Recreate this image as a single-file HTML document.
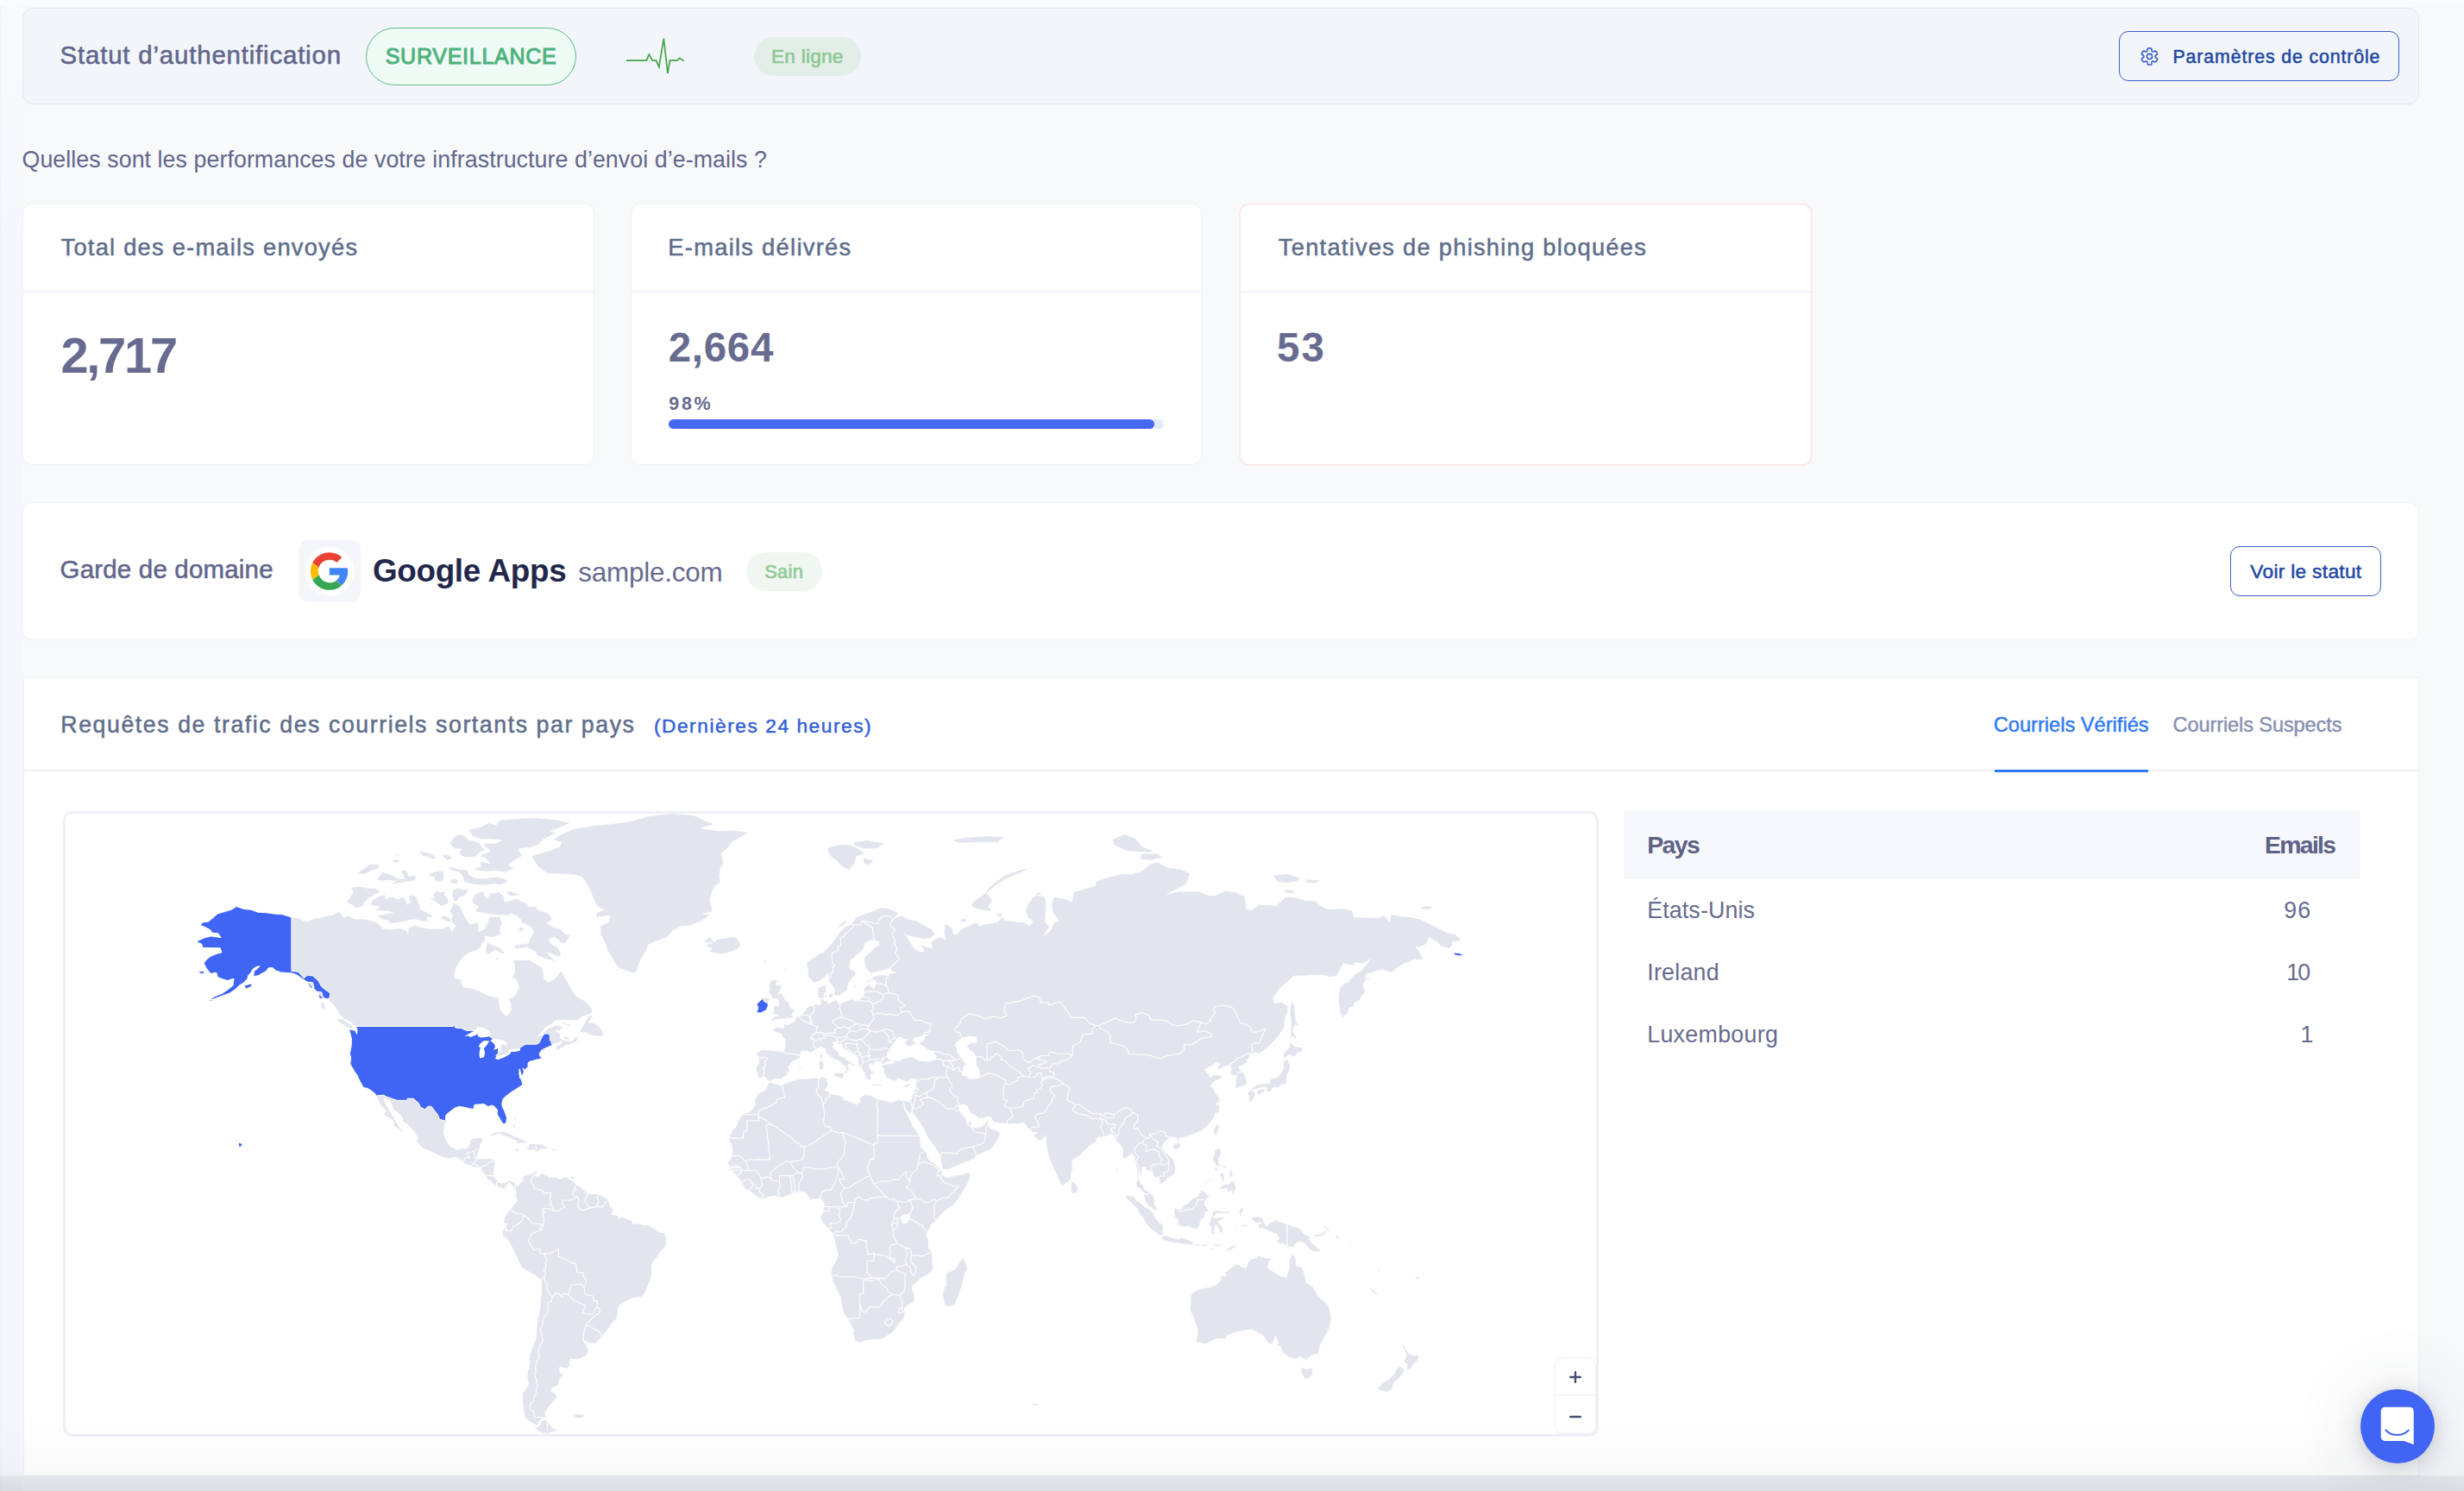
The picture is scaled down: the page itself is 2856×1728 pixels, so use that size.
<!DOCTYPE html><html lang="fr"><head><meta charset="utf-8"><title>Dashboard</title><style>
*{box-sizing:border-box;margin:0;padding:0}
html,body{width:2856px;height:1728px;overflow:hidden}
body{background:#f8f9fb;font-family:"Liberation Sans", sans-serif;position:relative}
.t{position:absolute;white-space:pre;font-family:"Liberation Sans", sans-serif}
.abs{position:absolute}
.card{position:absolute;background:#fff;border-radius:10px;box-shadow:0 0 0 1px rgba(228,232,240,.4)}
.hr{position:absolute;height:2px;background:#f1f4f9}
</style></head><body>
<div class="abs" style="left:0;top:0;width:26px;height:1728px;background:linear-gradient(180deg,#f9fafc 0,#f5f7fb 320px,#f5f7fb 100%);box-shadow:inset 2px 0 0 rgba(228,232,240,.28)"></div>
<div class="abs" style="left:0;top:0;width:2856px;height:7px;background:#fafbfc"></div>
<div class="abs" style="left:26px;top:9px;width:2778px;height:112px;background:#f2f5fa;border:1.5px solid #e2e6ed;border-radius:12px"></div>
<div class="abs" style="left:424px;top:32px;width:244px;height:67px;border-radius:34px;background:#effbf5;border:1.5px solid #5dba87"></div>
<svg class="abs" style="left:700px;top:30px" width="120" height="70" viewBox="700 30 120 70"><polyline fill="none" stroke="#45a347" stroke-width="1.7" stroke-linejoin="miter" points="726,70.2 749.2,70.2 752.4,63.1 756.3,70.2 760.6,70.2 763.8,77.5 769.3,44.6 773.9,85 776.5,70.2 784.5,70.2 787.9,67.4 792.8,70.6"/></svg>
<div class="abs" style="left:874px;top:42.5px;width:124px;height:45.5px;border-radius:23px;background:#e4eee9"></div>
<div class="abs" style="left:2456px;top:36px;width:325px;height:58px;border-radius:11px;border:1.5px solid #3f5fca"></div>
<svg class="abs" style="left:2476px;top:50px" width="32" height="32" viewBox="2476 50 32 32" fill="none" stroke="#3356c6" stroke-width="1.55" stroke-linejoin="round"><path d="M2498.10 65.45L2498.12 65.80L2498.20 66.15L2498.54 66.57L2499.42 67.13L2500.30 67.81L2500.53 68.38L2500.44 68.88L2500.27 69.35L2500.05 69.81L2499.81 70.25L2499.55 70.68L2499.26 71.09L2498.94 71.48L2498.55 71.80L2497.94 71.89L2496.92 71.47L2495.99 70.99L2495.46 70.90L2495.11 71.01L2494.80 71.17L2494.51 71.35L2494.24 71.61L2494.05 72.10L2494.00 73.16L2493.86 74.25L2493.47 74.73L2493.00 74.91L2492.50 74.99L2492.00 75.04L2491.50 75.05L2491.00 75.04L2490.50 74.99L2490.00 74.91L2489.53 74.73L2489.14 74.25L2489.00 73.16L2488.95 72.10L2488.76 71.61L2488.49 71.35L2488.20 71.17L2487.89 71.01L2487.54 70.90L2487.01 70.99L2486.08 71.47L2485.06 71.89L2484.45 71.80L2484.06 71.48L2483.74 71.09L2483.45 70.68L2483.19 70.25L2482.95 69.81L2482.73 69.35L2482.56 68.88L2482.47 68.38L2482.70 67.81L2483.58 67.13L2484.46 66.57L2484.80 66.15L2484.88 65.80L2484.90 65.45L2484.88 65.10L2484.80 64.75L2484.46 64.33L2483.58 63.77L2482.70 63.09L2482.47 62.52L2482.56 62.02L2482.73 61.55L2482.95 61.09L2483.19 60.65L2483.45 60.22L2483.74 59.81L2484.06 59.42L2484.45 59.10L2485.06 59.01L2486.08 59.43L2487.01 59.91L2487.54 60.00L2487.89 59.89L2488.20 59.73L2488.49 59.55L2488.76 59.29L2488.95 58.80L2489.00 57.74L2489.14 56.65L2489.53 56.17L2490.00 55.99L2490.50 55.91L2491.00 55.86L2491.50 55.85L2492.00 55.86L2492.50 55.91L2493.00 55.99L2493.47 56.17L2493.86 56.65L2494.00 57.74L2494.05 58.80L2494.24 59.29L2494.51 59.55L2494.80 59.73L2495.11 59.89L2495.46 60.00L2495.99 59.91L2496.92 59.43L2497.94 59.01L2498.55 59.10L2498.94 59.42L2499.26 59.81L2499.55 60.22L2499.81 60.65L2500.05 61.09L2500.27 61.55L2500.44 62.02L2500.53 62.52L2500.30 63.09L2499.42 63.77L2498.54 64.33L2498.20 64.75L2498.12 65.10Z"/><circle cx="2491.5" cy="65.45" r="3.05"/></svg>
<div class="card" style="left:27px;top:237px;width:660.5px;height:300.5px;"></div>
<div class="hr" style="left:27px;top:336.5px;width:660.5px"></div>
<div class="card" style="left:732px;top:237px;width:660px;height:300.5px;"></div>
<div class="hr" style="left:732px;top:336.5px;width:660px"></div>
<div class="card" style="left:1437.5px;top:237px;width:661px;height:300.5px;box-shadow:0 0 0 1.5px #fde3e6;"></div>
<div class="hr" style="left:1437.5px;top:336.5px;width:661px"></div>
<div class="abs" style="left:775px;top:486px;width:574px;height:11px;border-radius:6px;background:#e6eafc"></div>
<div class="abs" style="left:775px;top:486px;width:563px;height:11px;border-radius:6px;background:#4669f0"></div>
<div class="card" style="left:27px;top:583px;width:2776px;height:157.5px"></div>
<div class="abs" style="left:346px;top:626px;width:72px;height:72px;border-radius:11px;background:#f5f6fa"></div>
<div class="abs" style="left:353px;top:633px;width:58px;height:58px;border-radius:29px;background:radial-gradient(circle,#fff 0,#fff 55%,rgba(255,255,255,0) 100%)"></div>
<svg class="abs" style="left:360px;top:640px" width="43.6" height="44" viewBox="0 0 48 48"><path fill="#4285F4" d="M47.53 24.55c0-1.64-.15-3.2-.42-4.72H24v9.02h13.2c-.58 3.02-2.3 5.58-4.88 7.3l7.56 5.86c4.42-4.08 7.65-10.1 7.65-17.46z"/><path fill="#34A853" d="M24 48c6.48 0 11.93-2.13 15.89-5.81l-7.56-5.86c-2.15 1.45-4.92 2.3-8.33 2.3-6.26 0-11.57-4.22-13.47-9.91l-7.98 6.19C6.51 42.62 14.62 48 24 48z"/><path fill="#FBBC05" d="M10.53 28.72c-.48-1.45-.76-2.99-.76-4.72s.27-3.27.76-4.72l-7.98-6.19C.92 16.46 0 20.12 0 24s.92 7.54 2.56 10.91l7.97-6.19z"/><path fill="#EA4335" d="M24 9.5c3.54 0 6.71 1.22 9.21 3.6l6.85-6.85C35.9 2.38 30.47 0 24 0 14.62 0 6.51 5.38 2.56 13.09l7.98 6.19C12.43 13.72 17.74 9.5 24 9.5z"/></svg>
<div class="abs" style="left:865.3px;top:640px;width:87.6px;height:44.6px;border-radius:23px;background:#eff7f0"></div>
<div class="abs" style="left:2585px;top:633px;width:175px;height:58px;border-radius:11px;border:1.5px solid #3f5fca;background:#fff"></div>
<div class="abs" style="left:26.5px;top:785px;width:2777px;height:926px;background:#fff;border:1px solid #eef0f5"></div>
<div class="hr" style="left:27px;top:892px;width:2776px;background:#f0f2f7"></div>
<div class="abs" style="left:2311.7px;top:892px;width:178.1px;height:3px;background:#2f7af3"></div>
<div class="abs" style="left:72.5px;top:939.5px;width:1780px;height:725px;border:3px solid #eef0f6;border-radius:11px;background:#fff;overflow:hidden"></div>
<svg class="abs" style="left:75.5px;top:942.5px" width="1774" height="719" viewBox="75.5 942.5 1774 719"><path fill="#e2e5ed" stroke="#fff" stroke-width="0.8" stroke-linejoin="round" d="M337.4 1062.6L327.2 1059.3L316.9 1058.5L306.7 1057.1L298.5 1056.7L290.3 1053.7L282.2 1053.0L273.6 1050.0L267.8 1053.7L259.7 1056.0L251.5 1058.5L246.6 1062.9L241.2 1067.6L234.3 1068.3L231.8 1071.9L237.1 1074.0L243.3 1077.2L245.3 1080.6L252.3 1081.3L255.6 1086.1L244.5 1084.4L237.1 1086.1L226.5 1090.8L233.1 1093.5L234.3 1097.8L247.4 1098.2L254.7 1098.2L256.4 1103.4L250.2 1105.0L244.1 1107.6L240.0 1110.5L235.5 1115.5L238.4 1121.2L241.2 1124.9L244.1 1127.9L250.2 1126.7L251.9 1132.2L257.6 1134.3L263.7 1136.1L267.0 1134.6L270.7 1134.0L269.9 1137.6L269.5 1141.7L265.0 1145.2L257.6 1150.5L250.7 1153.3L245.3 1155.9L240.0 1158.5L246.6 1157.6L253.5 1155.0L259.7 1152.8L265.8 1150.5L271.9 1146.4L276.8 1141.7L282.2 1138.2L286.3 1134.0L287.1 1130.4L290.3 1126.7L292.4 1123.0L296.5 1119.9L300.6 1119.3L298.1 1121.8L294.0 1124.9L293.2 1131.0L298.5 1130.4L302.6 1127.9L307.5 1125.5L310.8 1121.2L315.7 1121.2L319.0 1124.3L325.1 1126.4L331.3 1127.0L337.4 1127.3L342.3 1128.8L348.5 1132.8L353.8 1136.4L357.9 1138.8L360.7 1142.9L366.0 1147.6L370.1 1152.8L374.2 1155.6L378.3 1157.3L381.6 1156.2L381.2 1159.6L386.5 1164.6L390.6 1170.2L392.6 1175.6L398.8 1180.5L404.9 1183.7L410.2 1187.5L411.9 1189.0L413.5 1192.7L413.1 1197.9L411.1 1193.8L404.1 1192.2L407.0 1203.6L406.6 1212.2L404.9 1220.7L406.2 1225.6L405.3 1232.5L407.8 1236.8L411.1 1242.5L413.1 1244.9L415.6 1250.6L420.9 1260.1L425.4 1260.8L429.9 1263.6L434.4 1267.2L435.2 1269.5L435.2 1269.5L436.8 1273.1L440.9 1280.8L447.1 1287.1L443.6 1290.4L447.9 1293.7L455.3 1298.5L456.1 1304.6L463.0 1309.4L464.7 1312.0L466.5 1310.7L463.0 1306.6L461.4 1303.8L456.9 1296.3L452.8 1289.7L449.9 1283.9L445.0 1276.3L444.6 1272.7L452.0 1276.3L455.3 1285.3L461.8 1290.2L466.3 1295.4L466.7 1299.8L472.4 1302.9L479.0 1310.7L483.5 1318.0L482.7 1322.7L487.6 1328.2L490.9 1331.6L497.8 1333.3L505.6 1337.7L511.3 1340.0L519.5 1342.8L526.5 1340.5L530.1 1341.5L536.9 1347.4L540.0 1349.3L545.7 1350.7L550.2 1352.6L555.9 1353.4L556.3 1354.3L560.0 1359.2L563.3 1363.0L563.7 1366.3L567.8 1367.9L572.3 1372.9L575.2 1373.7L580.1 1376.2L583.3 1377.8L585.4 1377.4L585.8 1373.7L589.1 1370.6L591.1 1370.8L593.6 1374.5L595.6 1377.8L597.9 1371.8L593.2 1368.8L589.1 1367.9L587.0 1369.6L580.9 1370.8L577.6 1369.6L574.7 1366.3L571.9 1362.1L571.9 1358.0L572.7 1351.8L573.9 1345.5L568.6 1341.9L562.5 1342.1L554.3 1342.6L550.6 1341.7L553.1 1339.2L553.5 1335.0L555.1 1331.6L556.3 1325.7L559.2 1321.0L558.4 1318.0L552.2 1318.0L546.1 1319.7L544.5 1321.0L543.2 1327.4L540.0 1330.8L535.9 1330.3L528.9 1332.0L525.6 1330.3L521.1 1327.8L516.6 1321.0L514.2 1313.7L514.6 1305.1L516.8 1298.7L515.8 1295.9L516.6 1291.5L521.5 1287.5L526.9 1283.5L531.8 1281.9L538.7 1283.0L544.1 1284.4L548.6 1284.8L549.4 1279.9L554.3 1279.5L560.4 1279.0L565.3 1282.1L569.4 1280.6L571.9 1281.3L576.0 1285.7L575.6 1290.6L579.7 1297.6L582.5 1302.2L585.0 1302.0L586.4 1299.8L587.0 1295.0L584.6 1287.9L581.7 1281.7L581.3 1277.7L582.9 1272.7L587.0 1269.1L591.1 1265.9L595.6 1263.1L601.3 1259.4L605.4 1256.6L603.8 1250.6L602.2 1248.9L601.3 1244.0L601.7 1238.2L603.4 1244.0L604.2 1247.8L607.1 1241.6L605.4 1237.3L607.9 1239.4L611.6 1235.8L611.6 1231.5L612.8 1230.0L619.8 1228.1L623.8 1227.1L627.9 1226.1L627.1 1225.2L624.7 1222.2L625.1 1219.7L627.9 1216.2L634.1 1213.2L640.2 1210.7L640.2 1209.2L643.5 1208.9L646.4 1208.2L650.9 1205.6L650.4 1208.2L645.1 1211.7L643.5 1214.7L646.4 1216.7L654.5 1211.7L664.8 1208.2L669.7 1204.6L667.6 1200.0L662.7 1206.2L656.6 1205.6L652.5 1204.6L648.8 1202.6L649.2 1199.5L648.4 1196.4L643.1 1194.0L648.4 1194.3L651.7 1190.1L650.4 1188.5L642.3 1188.2L634.1 1192.2L627.9 1198.5L623.0 1200.3L627.9 1194.8L632.8 1189.6L638.2 1186.9L642.3 1182.7L650.4 1182.1L660.7 1182.4L668.9 1182.1L675.0 1177.3L682.4 1175.6L686.5 1172.4L685.2 1167.4L679.9 1161.8L675.0 1157.9L668.9 1155.0L664.8 1150.5L661.5 1144.6L658.6 1138.8L654.5 1132.8L650.0 1124.6L647.6 1127.3L642.3 1134.0L634.9 1137.6L630.0 1133.4L629.6 1126.7L627.9 1119.9L619.8 1116.2L613.6 1111.7L605.4 1112.4L594.4 1111.7L596.0 1120.5L596.0 1126.7L593.2 1132.8L597.2 1134.6L600.9 1141.1L600.1 1145.8L596.0 1153.9L588.7 1157.3L591.1 1161.8L591.9 1170.2L589.1 1175.6L585.0 1176.2L580.9 1171.8L578.8 1167.4L577.6 1155.6L572.7 1155.0L564.5 1152.8L554.3 1147.6L546.1 1144.6L535.9 1143.5L533.8 1134.6L526.5 1132.8L526.9 1126.7L528.5 1121.2L531.8 1114.9L535.9 1109.2L543.2 1104.0L550.2 1101.4L556.3 1098.2L558.4 1093.5L562.5 1088.1L561.2 1084.7L570.7 1086.1L580.9 1082.0L578.8 1077.8L581.7 1069.4L578.8 1062.2L566.6 1061.5L564.5 1068.7L560.4 1076.5L554.3 1079.2L554.3 1068.0L544.1 1070.8L538.7 1062.9L535.9 1056.3L531.8 1048.9L525.6 1045.8L520.7 1055.6L523.6 1060.0L521.5 1067.3L527.7 1072.2L523.6 1079.2L519.5 1072.2L513.4 1075.8L497.0 1075.8L488.8 1074.4L480.6 1071.5L472.4 1075.1L472.4 1082.0L470.4 1077.8L464.3 1075.1L452.0 1076.5L443.8 1075.8L435.6 1068.0L421.3 1064.4L411.1 1064.4L402.9 1060.7L398.8 1062.9L392.6 1056.0L384.5 1060.0L378.3 1060.7L370.1 1063.6L364.0 1063.6L359.9 1065.8L353.8 1067.6L345.6 1063.6L337.4 1062.6ZM671.7 1196.4L679.1 1196.4L686.0 1200.0L692.6 1200.5L697.5 1201.0L698.7 1196.4L696.3 1191.7L691.4 1186.9L687.3 1184.3L682.0 1184.8L686.9 1176.2L682.0 1176.7L679.1 1181.6L675.4 1188.5L672.1 1192.7ZM389.4 1179.4L398.8 1181.6L402.1 1184.3L407.8 1188.0L409.4 1192.2L404.1 1191.7L398.8 1188.0L391.4 1183.2ZM370.1 1161.3L375.5 1161.8L377.5 1171.8L372.2 1166.9ZM650.4 1184.3L660.7 1186.9L661.5 1188.5L654.5 1187.5ZM650.9 1200.5L660.7 1202.3L658.6 1204.6L653.3 1203.6ZM566.8 1316.5L570.7 1312.8L576.8 1310.9L585.0 1311.1L591.1 1314.1L597.2 1316.7L603.4 1319.3L610.8 1323.1L609.5 1324.2L597.2 1325.0L598.9 1322.3L593.2 1320.1L587.8 1317.1L580.9 1315.0L577.6 1313.3L572.7 1315.2ZM609.7 1331.4L614.0 1324.8L616.5 1324.8L621.0 1325.0L627.9 1325.7L631.2 1327.8L634.7 1330.1L632.0 1331.2L625.9 1331.8L622.2 1334.4L617.7 1332.0L612.4 1332.7ZM593.8 1331.4L599.3 1331.0L602.6 1332.9L598.5 1333.9L594.0 1332.0ZM639.4 1330.8L645.7 1331.2L645.5 1332.9L639.4 1333.1ZM593.2 1295.4L596.0 1295.4L598.5 1297.6L598.1 1298.7L595.2 1296.8ZM594.0 1302.0L596.4 1303.3L596.8 1306.8L595.2 1305.9L593.6 1304.2ZM661.1 1363.2L665.0 1363.0L664.8 1365.9L661.1 1365.9ZM734.7 1127.9L728.2 1125.5L717.1 1121.8L711.8 1115.5L708.6 1108.6L703.6 1101.4L700.8 1092.2L695.5 1082.7L695.5 1072.9L705.7 1067.3L706.5 1060.7L691.4 1062.9L690.1 1057.8L699.5 1054.1L691.4 1049.6L687.3 1041.2L683.2 1031.0L679.1 1023.0L674.2 1015.6L662.7 1013.1L646.4 1012.6L634.1 1012.2L623.8 1004.6L617.7 995.8L615.7 991.4L634.1 986.0L648.4 980.5L650.4 975.8L640.2 973.0L648.4 967.3L662.7 960.4L685.2 956.5L705.7 954.5L730.2 951.5L750.7 945.3L779.3 942.2L803.9 944.3L816.2 950.4L828.4 954.5L812.1 959.5L832.5 962.4L848.9 961.4L867.3 964.4L861.2 968.2L848.9 974.9L842.8 982.3L835.4 988.7L838.7 999.4L834.6 1007.1L833.4 1013.9L834.6 1022.2L828.4 1026.2L824.4 1035.0L822.3 1043.5L824.4 1048.9L825.2 1056.3L814.1 1058.2L822.3 1059.3L818.2 1063.6L810.0 1068.0L799.8 1072.2L787.5 1073.6L779.3 1078.5L773.2 1085.4L765.0 1088.8L758.9 1090.8L750.7 1094.9L748.7 1101.4L744.6 1107.9L740.5 1115.5L738.4 1123.0ZM821.5 1102.7L831.3 1104.7L837.9 1105.3L846.9 1102.7L853.8 1099.5L858.7 1094.9L855.0 1088.1L848.9 1084.7L840.7 1086.8L831.3 1087.5L827.2 1091.5L822.3 1085.1L816.2 1089.5L814.1 1091.5L824.4 1092.2L816.2 1095.5L824.4 1098.8ZM597.9 1371.8L599.7 1374.1L602.2 1370.4L605.0 1368.3L605.4 1363.8L608.3 1361.7L610.8 1360.9L615.7 1360.1L618.9 1358.4L621.2 1356.1L622.6 1358.8L620.2 1361.7L621.4 1363.0L622.6 1362.6L627.1 1360.1L627.9 1357.2L629.2 1360.1L634.1 1361.3L635.3 1363.8L640.2 1363.8L644.3 1363.8L648.4 1365.9L651.7 1364.2L658.6 1363.4L661.1 1363.4L657.4 1364.6L660.7 1366.7L665.6 1369.2L666.8 1372.5L669.7 1373.3L675.0 1377.4L679.1 1381.5L681.1 1383.0L685.6 1383.2L691.4 1383.2L693.8 1383.8L698.3 1385.6L702.4 1388.5L704.1 1389.3L706.5 1397.1L709.8 1400.4L709.8 1404.1L708.1 1407.3L715.9 1408.1L716.7 1412.2L720.0 1409.8L726.1 1411.8L732.3 1414.7L733.1 1418.0L738.4 1417.2L744.6 1419.2L750.7 1419.0L756.8 1422.5L762.2 1427.0L769.9 1428.6L771.6 1433.6L772.0 1436.8L771.2 1443.4L768.3 1447.1L765.0 1450.5L762.2 1454.2L758.9 1459.6L756.8 1460.8L754.8 1467.1L754.8 1475.5L754.0 1480.9L751.9 1486.0L749.9 1491.5L746.6 1498.8L742.5 1502.9L737.6 1503.1L731.5 1504.4L724.9 1507.4L718.4 1511.8L715.5 1516.1L715.5 1523.2L714.3 1527.6L709.8 1532.1L705.7 1538.3L701.2 1543.8L695.9 1550.6L689.7 1556.4L684.4 1556.2L677.9 1553.9L675.4 1551.5L675.8 1555.2L679.9 1558.0L680.3 1562.2L682.4 1563.1L679.1 1570.7L673.0 1574.0L664.8 1575.2L659.9 1574.5L659.9 1582.7L656.6 1585.6L648.4 1584.1L648.0 1585.1L648.8 1591.0L654.1 1593.0L650.4 1594.4L647.6 1598.9L646.8 1605.0L639.4 1608.0L638.2 1611.6L644.3 1615.7L645.1 1619.3L638.2 1626.7L634.1 1632.0L631.6 1636.3L631.2 1639.6L634.5 1643.7L630.0 1643.4L624.3 1646.7L622.6 1652.0L617.7 1649.5L612.4 1646.7L608.3 1642.8L606.7 1636.3L605.4 1628.3L605.0 1620.4L605.0 1613.6L609.5 1609.0L612.4 1602.4L610.3 1596.4L611.2 1589.0L612.4 1585.1L613.6 1579.8L613.2 1569.3L614.8 1566.4L617.3 1558.9L621.0 1550.2L621.4 1538.3L622.2 1533.4L622.6 1527.2L624.3 1521.0L625.9 1513.5L626.3 1505.7L627.1 1498.8L627.3 1491.1L626.7 1483.5L622.2 1479.2L616.9 1476.1L609.5 1472.1L603.8 1467.9L602.2 1464.6L598.9 1457.1L596.4 1452.5L592.7 1444.7L589.1 1438.5L587.0 1435.2L582.5 1432.3L582.1 1428.6L581.6 1426.5L585.0 1421.7L587.4 1418.0L583.3 1416.7L583.7 1411.4L586.6 1407.3L587.0 1404.1L591.1 1401.2L591.9 1400.0L594.4 1396.7L597.2 1393.0L598.9 1391.4L597.2 1384.8L597.7 1380.3L595.6 1377.8ZM633.7 1645.6L635.7 1648.9L638.2 1652.8L642.3 1655.4L647.6 1656.5L642.3 1658.8L634.1 1660.8L627.9 1660.2L621.8 1656.8L619.8 1655.1L623.8 1652.5L626.7 1650.6L626.3 1646.7L630.0 1645.0ZM663.9 1638.5L669.3 1637.9L677.9 1639.3L675.0 1642.3L670.1 1643.4L664.8 1641.7ZM890.2 1254.3L892.7 1253.8L902.3 1256.6L905.4 1257.6L910.3 1254.8L916.4 1252.4L926.7 1249.6L934.8 1249.6L943.0 1248.5L949.6 1248.9L954.5 1247.3L956.5 1249.2L959.8 1248.5L957.8 1252.0L959.0 1255.7L959.8 1258.0L956.1 1261.3L955.3 1262.7L958.6 1264.0L961.4 1266.6L965.5 1267.9L968.4 1267.7L976.6 1270.2L977.8 1274.1L986.0 1276.8L992.1 1279.5L996.2 1276.8L996.4 1271.3L1002.4 1267.7L1008.9 1269.1L1016.7 1273.4L1025.7 1274.7L1033.1 1277.0L1036.7 1275.4L1041.2 1273.8L1046.6 1275.2L1047.6 1281.0L1048.2 1285.3L1050.2 1288.8L1052.7 1292.8L1055.1 1298.5L1057.6 1304.2L1060.5 1308.5L1065.4 1315.9L1066.6 1320.1L1066.6 1326.1L1067.8 1330.3L1072.3 1332.9L1074.8 1341.3L1075.8 1343.0L1078.9 1345.9L1083.0 1347.6L1087.9 1353.0L1090.7 1355.1L1091.6 1356.3L1091.6 1359.7L1092.4 1360.9L1095.3 1364.2L1100.6 1363.8L1106.7 1361.5L1114.9 1360.9L1121.0 1358.4L1124.3 1358.6L1123.5 1364.6L1122.3 1369.2L1119.0 1374.9L1114.9 1381.5L1110.8 1388.5L1103.8 1396.9L1100.0 1398.9L1094.4 1403.2L1088.7 1408.8L1084.6 1414.3L1081.7 1416.7L1078.9 1418.8L1076.8 1423.9L1074.8 1427.8L1073.2 1431.9L1075.2 1435.2L1076.0 1440.1L1076.0 1446.3L1079.7 1450.5L1080.5 1458.7L1080.5 1467.1L1081.3 1469.2L1078.1 1474.2L1071.9 1478.4L1065.8 1481.4L1062.9 1485.2L1057.2 1489.4L1056.8 1493.7L1058.8 1498.0L1059.6 1505.3L1059.2 1508.3L1051.5 1512.7L1047.8 1515.9L1049.0 1520.5L1047.4 1527.2L1041.6 1533.2L1038.0 1538.8L1032.6 1545.1L1028.6 1547.4L1022.8 1550.9L1019.1 1552.0L1010.5 1552.2L1004.4 1552.9L996.2 1555.7L991.7 1553.9L989.7 1553.6L989.3 1547.4L987.6 1546.1L989.3 1541.5L985.2 1533.9L981.9 1527.6L977.0 1520.5L975.4 1514.0L973.7 1503.1L969.6 1494.5L965.5 1485.2L962.7 1478.8L962.7 1473.4L964.7 1467.1L969.2 1459.2L970.9 1452.5L968.4 1445.1L966.8 1436.0L964.7 1432.3L963.5 1427.8L959.8 1423.5L953.7 1417.2L950.4 1410.2L952.8 1405.7L953.7 1402.8L954.5 1397.9L954.1 1392.6L950.8 1388.7L948.3 1388.9L943.0 1389.3L938.9 1389.7L934.8 1384.4L932.4 1381.3L928.3 1381.1L924.2 1381.5L919.3 1382.3L913.6 1384.6L905.8 1387.9L901.3 1386.4L898.0 1385.8L891.9 1386.4L883.3 1389.5L877.6 1386.9L870.2 1381.5L867.3 1379.0L863.2 1377.0L860.4 1372.9L858.3 1368.3L854.6 1364.2L852.6 1362.1L850.5 1358.4L846.0 1356.3L845.6 1352.2L842.8 1346.7L845.6 1343.4L846.9 1340.9L848.5 1332.9L847.7 1327.0L844.6 1321.0L845.2 1316.3L847.7 1311.5L849.3 1308.5L853.4 1304.2L855.0 1298.1L860.4 1291.0L861.6 1289.9L867.3 1288.4L872.6 1283.9L874.7 1279.0L874.3 1274.5L876.3 1269.5L879.6 1265.9L883.3 1264.5L886.6 1262.4L888.6 1258.0ZM1115.9 1456.5L1119.8 1465.0L1121.0 1470.4L1117.8 1475.5L1116.5 1481.4L1114.1 1490.3L1110.8 1500.1L1107.9 1507.4L1106.3 1512.0L1099.1 1514.4L1094.4 1511.8L1092.8 1505.3L1091.6 1498.8L1094.0 1492.4L1096.1 1489.4L1095.7 1479.7L1096.3 1474.2L1099.8 1473.4L1103.8 1472.1L1107.9 1468.7L1110.8 1463.7L1113.7 1458.7ZM1054.5 1275.0L1055.6 1273.6L1057.4 1268.1L1059.6 1263.1L1061.3 1258.5L1061.3 1253.8L1062.3 1250.6L1059.6 1250.6L1056.0 1249.6L1052.3 1252.7L1048.6 1253.1L1045.3 1251.0L1040.0 1249.4L1039.2 1252.0L1035.1 1252.4L1030.6 1249.9L1026.5 1248.7L1025.7 1244.4L1022.4 1242.5L1024.5 1239.7L1023.6 1237.8L1021.2 1236.8L1021.6 1234.4L1026.9 1232.7L1033.1 1232.2L1036.7 1230.8L1033.3 1229.3L1033.9 1228.3L1042.1 1229.1L1046.6 1225.9L1052.5 1224.7L1058.2 1224.4L1062.9 1228.1L1069.1 1229.3L1076.8 1229.6L1084.2 1227.1L1084.8 1223.9L1082.2 1219.7L1076.8 1217.0L1070.7 1212.7L1067.4 1211.2L1064.6 1208.7L1067.8 1206.7L1070.7 1204.1L1071.1 1201.0L1075.2 1199.0L1070.7 1199.0L1065.0 1201.3L1058.8 1203.1L1057.6 1206.4L1063.3 1207.7L1059.2 1209.7L1055.1 1212.2L1051.5 1212.2L1047.4 1207.9L1051.9 1204.1L1046.6 1203.9L1043.3 1201.5L1040.2 1202.1L1038.0 1205.4L1035.9 1208.7L1031.8 1213.7L1031.4 1217.7L1028.6 1218.7L1027.7 1222.2L1029.0 1225.2L1029.4 1226.6L1033.1 1228.2L1032.6 1229.6L1026.9 1229.7L1023.6 1232.5L1021.6 1234.2L1021.6 1231.5L1020.8 1230.3L1017.1 1229.8L1014.2 1229.8L1012.6 1232.5L1011.4 1234.6L1008.3 1231.5L1006.9 1234.4L1008.1 1237.3L1009.7 1240.6L1012.8 1243.0L1012.8 1245.6L1011.0 1244.2L1008.5 1244.4L1009.3 1246.8L1008.9 1250.8L1006.5 1251.5L1004.0 1249.9L1003.0 1249.6L1001.5 1245.4L1000.9 1244.3L1003.2 1242.5L1000.7 1242.3L999.3 1239.4L997.0 1236.3L996.0 1235.6L993.8 1232.5L994.0 1228.1L993.8 1225.4L991.7 1223.2L990.1 1222.4L988.4 1221.5L983.9 1219.2L981.7 1217.2L976.6 1214.2L975.4 1210.0L973.5 1208.2L971.3 1210.7L970.0 1207.2L970.6 1206.4L968.0 1206.4L964.7 1207.7L965.5 1210.0L965.1 1213.7L965.9 1215.0L969.6 1216.6L972.5 1222.4L976.2 1224.9L980.5 1225.2L979.4 1226.9L983.5 1229.0L988.0 1231.3L990.1 1233.7L989.5 1235.4L987.8 1234.2L984.8 1232.1L982.3 1233.9L982.1 1235.8L984.4 1238.7L982.1 1240.4L980.3 1244.2L978.4 1244.2L978.4 1243.5L979.2 1240.9L980.7 1238.7L978.8 1234.6L977.0 1234.2L975.6 1233.2L974.7 1231.3L972.7 1230.4L970.6 1228.3L966.1 1227.4L964.5 1225.9L962.3 1223.9L959.8 1222.7L957.3 1219.7L956.5 1217.0L955.7 1215.0L954.7 1214.5L950.8 1212.7L947.9 1214.7L945.3 1215.8L944.0 1216.2L941.6 1218.5L938.5 1219.2L936.3 1218.2L933.4 1217.7L929.5 1217.7L926.9 1220.2L927.3 1222.4L927.5 1225.2L923.4 1227.6L919.5 1229.1L917.2 1231.0L914.4 1234.6L913.0 1237.0L915.2 1240.4L912.3 1242.3L911.3 1245.6L906.6 1248.7L905.4 1249.9L899.7 1249.9L896.4 1250.0L892.5 1252.7L891.5 1253.4L888.6 1250.8L886.1 1247.8L884.1 1247.8L882.1 1248.7L877.8 1248.7L878.4 1244.0L876.7 1241.8L875.5 1240.4L876.1 1237.5L878.0 1233.4L879.0 1228.8L878.2 1225.4L878.0 1224.2L876.3 1220.2L880.0 1217.7L882.9 1216.0L890.6 1216.5L898.8 1217.3L902.3 1217.7L907.0 1218.0L908.2 1217.0L909.3 1211.5L909.9 1206.9L909.5 1203.9L907.0 1202.1L905.4 1198.2L902.9 1196.6L900.5 1195.9L896.6 1195.3L894.9 1192.5L898.2 1190.5L902.1 1190.1L906.2 1190.9L908.0 1190.9L907.8 1185.6L909.3 1185.9L909.9 1187.2L914.8 1186.4L915.6 1185.1L918.9 1184.0L920.9 1182.7L920.9 1179.7L922.0 1178.6L924.8 1177.8L927.5 1176.5L929.1 1175.9L931.0 1173.0L933.0 1170.4L933.8 1167.7L936.5 1166.3L936.9 1165.2L942.6 1164.9L943.8 1163.5L947.1 1163.5L949.6 1164.4L949.2 1162.1L951.2 1162.4L950.6 1160.1L949.6 1156.8L948.3 1155.9L947.5 1153.0L947.5 1147.6L948.1 1144.1L955.1 1141.1L957.8 1140.2L957.3 1143.5L956.5 1147.0L959.0 1147.9L956.3 1149.6L954.9 1154.8L953.3 1156.2L953.1 1157.3L955.3 1159.3L959.8 1159.6L958.8 1162.1L961.4 1161.8L963.9 1160.8L965.5 1159.3L969.4 1158.2L970.9 1161.3L972.7 1162.4L978.0 1160.8L981.9 1159.0L988.4 1157.1L989.5 1157.3L990.7 1159.6L994.8 1159.3L995.8 1158.2L996.2 1156.5L1000.7 1154.5L1000.7 1152.2L1000.3 1147.6L1002.6 1142.3L1006.9 1140.2L1009.3 1142.9L1012.4 1144.6L1013.0 1144.4L1014.2 1139.9L1014.6 1136.5L1010.5 1135.2L1010.3 1131.6L1015.7 1130.1L1020.8 1129.1L1029.2 1130.1L1031.0 1127.9L1033.1 1127.0L1038.2 1127.1L1033.1 1125.5L1031.8 1122.4L1025.7 1123.6L1016.7 1125.7L1008.5 1127.7L1005.4 1123.9L1002.0 1119.9L1001.5 1114.3L1000.7 1110.5L1002.8 1107.3L1007.3 1103.4L1008.9 1102.4L1014.6 1096.8L1018.5 1094.9L1018.3 1091.5L1014.8 1089.8L1013.2 1089.3L1008.9 1089.5L1005.0 1091.0L1002.4 1092.9L1001.5 1097.5L997.5 1102.5L992.1 1106.6L989.3 1110.2L985.4 1111.7L984.8 1116.2L984.6 1122.6L990.1 1124.9L991.7 1127.3L990.9 1129.8L986.4 1134.3L982.5 1140.2L981.5 1146.6L978.2 1149.5L972.9 1153.0L969.0 1154.2L967.0 1153.9L966.4 1150.2L967.0 1146.7L963.3 1140.5L960.2 1136.7L960.0 1132.8L958.4 1127.3L956.5 1132.2L953.9 1133.1L950.2 1136.1L943.2 1138.8L937.7 1133.1L935.7 1130.4L936.1 1124.3L934.6 1119.9L934.8 1114.9L939.5 1111.3L946.1 1107.3L949.6 1104.7L953.7 1103.4L958.6 1098.2L964.3 1091.5L968.4 1086.1L973.3 1079.4L979.9 1072.9L985.6 1071.2L991.9 1062.6L1000.3 1059.3L1011.4 1055.1L1020.0 1051.3L1027.7 1051.9L1035.9 1055.2L1041.6 1057.3L1037.1 1062.0L1045.3 1060.7L1051.5 1064.4L1061.7 1066.5L1071.9 1072.2L1080.1 1076.5L1083.0 1082.7L1078.1 1086.8L1069.9 1087.8L1057.6 1085.4L1049.4 1083.4L1047.0 1080.3L1051.5 1086.8L1056.8 1094.9L1059.6 1099.5L1065.8 1102.4L1070.3 1102.1L1069.5 1098.8L1065.0 1093.9L1077.2 1097.8L1080.1 1097.8L1078.1 1091.5L1084.2 1087.5L1088.3 1085.4L1095.3 1088.1L1094.4 1084.1L1093.6 1079.9L1094.8 1073.6L1091.6 1070.1L1098.5 1071.5L1103.8 1075.8L1104.7 1082.0L1108.8 1082.0L1112.8 1077.2L1121.0 1072.9L1131.3 1068.0L1135.4 1072.9L1139.4 1070.8L1149.7 1069.4L1155.8 1067.6L1162.0 1061.1L1163.6 1065.8L1178.3 1068.0L1186.5 1068.0L1192.6 1072.2L1196.7 1068.0L1190.6 1062.2L1188.1 1054.8L1190.6 1048.1L1196.3 1039.7L1200.8 1036.9L1211.1 1038.9L1212.3 1048.9L1211.5 1060.0L1211.1 1068.0L1216.0 1073.6L1209.0 1084.1L1217.2 1077.8L1220.5 1068.7L1227.4 1067.3L1219.2 1056.3L1218.4 1045.1L1221.3 1038.9L1231.5 1040.4L1241.7 1044.3L1243.8 1033.4L1258.1 1029.4L1268.3 1026.2L1270.4 1020.5L1282.7 1016.4L1299.0 1012.2L1311.3 1012.2L1323.6 1008.8L1331.8 1001.1L1341.2 998.3L1352.2 1004.6L1368.6 1007.1L1378.8 1011.4L1376.8 1018.9L1372.7 1025.4L1364.5 1029.4L1352.2 1035.8L1364.5 1032.6L1378.8 1032.6L1389.1 1032.6L1401.3 1037.3L1407.5 1037.3L1419.8 1031.8L1432.0 1033.4L1442.3 1038.1L1444.3 1052.6L1450.4 1054.1L1458.6 1048.1L1470.9 1048.1L1479.1 1049.6L1485.2 1042.8L1490.5 1038.5L1501.6 1039.7L1511.8 1042.8L1524.1 1043.5L1530.2 1048.9L1538.4 1053.4L1552.7 1052.2L1567.1 1054.8L1569.1 1062.2L1579.3 1062.6L1587.5 1062.9L1597.8 1062.9L1603.1 1060.4L1610.0 1067.3L1612.1 1059.3L1622.3 1061.1L1634.6 1062.2L1644.8 1064.4L1651.0 1067.4L1661.2 1072.2L1669.4 1076.5L1677.5 1080.6L1685.7 1081.7L1693.1 1087.5L1689.8 1090.8L1682.9 1091.5L1682.5 1096.2L1678.8 1098.8L1669.4 1096.2L1665.3 1091.5L1655.9 1086.1L1653.0 1092.9L1651.0 1094.5L1644.8 1097.5L1640.7 1096.5L1646.0 1104.7L1648.1 1108.9L1647.7 1112.7L1638.7 1111.1L1632.5 1114.9L1628.4 1115.5L1620.3 1120.5L1612.1 1126.7L1601.8 1123.6L1593.7 1124.9L1589.6 1127.3L1583.4 1127.9L1582.6 1135.8L1579.3 1139.9L1582.2 1149.3L1576.5 1156.2L1577.3 1157.3L1569.1 1161.8L1568.7 1166.3L1563.6 1167.4L1562.2 1172.9L1555.6 1178.9L1552.7 1172.9L1551.1 1161.8L1550.7 1153.3L1552.7 1144.6L1556.8 1139.3L1563.0 1137.0L1568.3 1129.8L1576.9 1124.3L1583.4 1117.4L1588.3 1111.1L1579.3 1116.8L1570.3 1114.9L1568.3 1118.7L1556.8 1116.2L1548.6 1130.4L1540.5 1132.2L1532.3 1129.5L1524.1 1129.8L1511.8 1130.4L1499.5 1130.7L1489.3 1139.9L1481.1 1147.0L1475.0 1156.8L1477.0 1162.1L1485.2 1160.7L1492.6 1165.7L1492.2 1171.8L1489.3 1178.4L1488.5 1183.7L1488.5 1189.6L1481.9 1199.5L1472.9 1209.7L1468.9 1213.2L1459.4 1220.7L1454.1 1219.2L1449.6 1222.2L1449.2 1223.2L1445.5 1227.1L1445.1 1230.3L1439.0 1234.4L1436.1 1235.4L1436.1 1238.2L1439.8 1241.1L1442.7 1246.3L1443.9 1248.7L1444.5 1253.1L1443.5 1256.6L1442.7 1257.6L1438.2 1258.7L1432.0 1261.0L1431.2 1259.0L1432.0 1255.2L1432.0 1250.6L1432.6 1246.6L1427.1 1245.4L1425.5 1243.3L1425.9 1241.1L1427.1 1236.8L1423.4 1234.6L1417.7 1236.1L1412.0 1239.7L1410.7 1236.8L1414.0 1232.2L1409.5 1230.3L1403.8 1234.9L1397.2 1238.2L1396.0 1239.4L1399.3 1244.0L1401.3 1245.4L1401.3 1247.8L1408.3 1244.9L1415.7 1246.8L1415.2 1249.4L1406.7 1253.1L1402.6 1258.3L1406.7 1261.3L1409.1 1267.2L1413.2 1273.1L1413.2 1276.8L1409.1 1279.0L1413.2 1281.0L1413.2 1284.8L1412.0 1288.4L1408.3 1289.9L1406.7 1294.1L1403.8 1298.5L1401.3 1302.0L1397.7 1305.3L1394.0 1309.0L1391.9 1310.3L1386.2 1312.6L1381.7 1314.6L1378.8 1315.0L1374.7 1316.9L1368.6 1318.2L1366.1 1319.3L1365.7 1323.1L1363.7 1322.3L1363.3 1318.2L1358.8 1317.4L1356.3 1317.8L1352.2 1320.6L1348.1 1324.8L1346.9 1329.5L1350.2 1334.1L1355.1 1339.0L1357.6 1340.9L1360.4 1345.5L1361.6 1350.5L1362.3 1355.5L1361.2 1358.4L1360.4 1360.7L1356.7 1362.6L1352.6 1364.8L1351.0 1367.9L1345.3 1371.8L1343.2 1372.1L1343.4 1367.1L1344.0 1366.3L1341.8 1364.6L1338.3 1364.0L1335.9 1360.5L1335.5 1359.0L1333.0 1357.2L1327.7 1355.3L1327.3 1352.0L1325.6 1351.8L1323.6 1352.6L1323.4 1355.5L1323.2 1358.8L1320.3 1364.2L1320.7 1369.6L1323.6 1372.5L1324.8 1372.9L1326.0 1377.8L1330.5 1380.3L1332.2 1381.9L1333.0 1382.1L1336.3 1385.4L1337.7 1390.1L1337.5 1391.8L1337.9 1396.3L1339.3 1397.3L1341.0 1401.6L1337.9 1402.0L1334.2 1399.1L1332.8 1398.3L1329.3 1395.3L1326.9 1391.4L1325.8 1387.7L1325.0 1385.2L1325.0 1381.9L1324.2 1380.9L1322.4 1379.3L1320.7 1377.0L1317.0 1375.1L1316.4 1370.8L1317.7 1366.5L1317.4 1363.0L1318.3 1358.8L1317.9 1356.1L1316.2 1351.3L1316.2 1349.5L1314.4 1344.2L1313.8 1339.2L1310.9 1336.3L1310.9 1337.5L1308.0 1338.8L1304.8 1342.1L1300.3 1341.5L1301.1 1335.8L1300.3 1329.5L1297.4 1325.7L1294.5 1323.8L1292.1 1321.2L1291.7 1319.7L1290.0 1314.6L1287.6 1313.7L1285.1 1314.6L1280.6 1316.9L1275.3 1317.6L1271.2 1318.0L1270.0 1321.4L1269.4 1323.1L1265.5 1325.5L1262.6 1327.4L1258.5 1331.6L1255.2 1334.1L1251.2 1338.8L1246.7 1341.5L1243.0 1344.2L1242.2 1348.0L1243.0 1353.4L1242.4 1356.7L1241.1 1358.2L1241.1 1365.0L1237.7 1369.2L1234.4 1370.8L1231.7 1374.2L1229.3 1372.5L1226.4 1366.5L1224.6 1361.1L1220.7 1354.3L1217.6 1346.3L1216.4 1343.4L1214.3 1337.1L1212.5 1328.9L1211.9 1324.4L1211.9 1319.7L1211.1 1317.6L1211.1 1315.0L1209.4 1319.3L1204.9 1321.2L1202.5 1320.6L1199.2 1317.4L1196.7 1314.8L1200.8 1313.3L1202.1 1311.8L1198.8 1312.2L1196.3 1312.2L1193.5 1308.5L1190.6 1307.4L1188.3 1303.6L1186.5 1301.1L1178.3 1302.0L1174.2 1302.0L1169.3 1302.4L1166.5 1302.0L1162.4 1301.6L1156.2 1301.1L1150.9 1299.8L1148.0 1294.6L1144.8 1293.5L1139.4 1295.9L1133.3 1295.4L1129.6 1291.9L1125.1 1290.4L1122.5 1285.5L1119.8 1280.6L1114.9 1279.0L1113.1 1281.0L1110.6 1281.0L1110.8 1283.7L1112.4 1287.3L1116.1 1292.4L1117.6 1294.1L1119.8 1296.8L1119.8 1300.3L1122.3 1304.0L1122.1 1300.7L1123.9 1297.9L1125.5 1301.6L1125.5 1304.4L1129.6 1306.4L1137.0 1305.3L1140.7 1301.7L1143.7 1298.3L1145.2 1297.0L1145.0 1300.3L1145.2 1303.1L1147.6 1307.4L1154.2 1309.0L1159.1 1313.5L1157.0 1318.4L1154.6 1322.7L1150.9 1328.6L1146.0 1332.5L1140.3 1335.0L1135.8 1337.1L1131.7 1338.6L1128.0 1343.0L1123.1 1344.9L1115.5 1347.4L1110.8 1349.7L1104.7 1352.2L1098.7 1354.7L1092.4 1355.3L1091.4 1352.6L1090.1 1346.3L1089.5 1339.8L1088.5 1337.5L1082.6 1328.2L1074.8 1318.0L1071.9 1311.5L1070.1 1306.9L1066.6 1302.4L1063.5 1297.4L1059.6 1291.9L1056.8 1289.7L1057.6 1283.0L1057.2 1283.3L1055.4 1288.4L1054.5 1290.8L1051.9 1288.4L1049.4 1285.3L1047.8 1281.0L1046.8 1275.2L1052.7 1275.9ZM891.1 1183.5L897.2 1181.9L900.5 1180.5L906.6 1180.5L911.1 1179.7L915.6 1179.7L920.1 1177.5L917.2 1175.6L921.3 1169.1L916.0 1167.7L914.8 1164.1L914.0 1161.3L909.5 1158.5L907.8 1153.3L905.8 1151.0L901.3 1150.5L904.2 1147.6L906.2 1141.7L898.8 1140.5L901.7 1135.2L893.9 1135.2L890.6 1141.1L891.5 1147.6L889.0 1148.7L892.7 1151.6L894.7 1156.8L900.5 1156.8L902.5 1161.3L901.7 1165.2L896.4 1165.2L895.6 1168.5L897.6 1171.3L893.1 1173.5L898.8 1175.1L902.1 1176.2L897.2 1177.3ZM959.4 981.4L971.7 978.6L979.9 977.7L990.1 980.5L1002.4 988.7L992.1 992.3L990.1 1000.2L983.9 1008.0L975.8 1004.6L969.6 997.6L961.4 991.4L958.6 985.1ZM988.0 975.8L1004.4 973.0L1024.9 976.8L1016.7 983.2L1000.3 983.2L990.1 979.6ZM1000.3 993.2L1012.6 996.7L1006.5 1002.0L999.5 999.4ZM1125.1 1048.1L1131.3 1041.2L1141.5 1035.0L1145.6 1027.8L1153.8 1021.3L1164.0 1013.9L1180.4 1008.0L1194.7 1004.6L1184.5 1010.5L1164.0 1018.9L1151.7 1027.0L1143.5 1035.0L1149.7 1042.0L1145.6 1050.4L1149.7 1055.6L1139.4 1054.8L1133.3 1053.4L1127.2 1051.1ZM1112.0 1065.1L1118.2 1063.6L1120.2 1067.3L1114.9 1069.4ZM1153.8 1057.8L1162.0 1058.5L1159.9 1062.2L1155.0 1061.5ZM1303.1 966.3L1315.4 971.1L1323.6 980.5L1337.9 986.0L1329.7 987.8L1319.5 986.9L1305.2 986.0L1290.9 978.6L1288.8 972.0ZM1321.5 988.7L1342.0 988.7L1346.1 993.2L1333.8 996.7L1321.5 995.8ZM1102.6 973.0L1119.0 970.1L1143.5 968.2L1164.0 969.2L1155.8 975.8L1131.3 975.8L1110.8 976.8ZM1475.0 1013.9L1491.4 1012.2L1507.7 1017.2L1501.6 1021.3L1489.3 1023.0L1479.1 1021.3ZM1511.8 1018.1L1530.2 1019.7L1524.1 1023.8L1513.9 1022.2ZM1487.3 1030.2L1497.5 1031.0L1501.6 1035.8L1489.3 1034.2ZM1645.6 1051.9L1652.6 1048.9L1660.8 1050.4L1657.1 1053.4L1648.9 1053.7ZM1498.3 1160.1L1500.4 1167.4L1500.8 1175.6L1502.0 1183.7L1506.5 1189.6L1500.4 1187.5L1497.9 1195.3L1502.0 1200.5L1501.6 1204.1L1497.5 1201.0L1494.8 1204.6L1495.7 1194.3L1496.1 1183.7L1494.6 1174.6L1495.0 1165.2ZM1495.0 1207.2L1500.8 1212.7L1509.0 1213.2L1509.8 1218.2L1503.2 1220.2L1500.4 1224.7L1494.2 1221.7L1491.4 1223.2L1488.5 1227.1L1486.9 1221.7L1489.3 1218.2L1493.8 1213.2ZM1491.0 1227.1L1493.4 1230.0L1495.2 1235.4L1493.4 1242.5L1491.2 1244.9L1491.0 1249.6L1490.7 1254.8L1487.3 1257.1L1486.0 1255.7L1484.0 1257.1L1482.4 1259.7L1479.9 1259.9L1475.0 1259.7L1474.6 1261.3L1472.1 1264.9L1469.9 1265.2L1467.2 1263.1L1467.6 1259.9L1462.7 1259.4L1456.6 1261.3L1452.5 1262.9L1450.0 1262.9L1450.4 1260.8L1454.5 1258.0L1457.4 1255.9L1463.5 1255.5L1468.0 1255.2L1470.9 1254.8L1471.3 1252.0L1474.2 1248.7L1476.2 1246.3L1475.0 1249.6L1479.9 1247.8L1482.8 1244.4L1485.2 1241.6L1487.3 1236.3L1486.9 1231.5L1488.5 1228.6ZM1456.2 1264.5L1458.6 1262.7L1463.5 1261.3L1465.6 1263.6L1463.5 1265.9L1458.6 1268.4L1456.6 1267.2ZM1446.3 1264.9L1450.0 1263.1L1453.3 1264.5L1454.5 1268.1L1451.7 1274.5L1449.2 1276.3L1447.2 1275.0L1447.6 1269.5L1445.1 1267.7ZM1409.5 1302.7L1413.2 1302.9L1411.6 1309.4L1408.9 1316.1L1405.8 1311.5L1406.7 1307.2ZM1359.2 1327.4L1362.5 1324.6L1367.0 1324.0L1368.6 1326.1L1366.1 1329.9L1362.5 1332.0L1359.2 1330.8ZM1241.3 1367.1L1245.0 1370.4L1249.1 1376.2L1248.7 1380.7L1244.2 1383.0L1241.7 1381.9L1240.7 1376.6L1241.1 1372.1ZM1407.9 1330.8L1414.0 1330.8L1415.2 1335.8L1412.0 1341.7L1412.4 1348.4L1417.7 1349.9L1422.2 1355.5L1418.9 1353.8L1415.7 1350.9L1409.5 1350.9L1407.9 1348.0L1405.4 1345.5L1404.6 1340.0L1406.7 1338.8ZM1427.5 1367.1L1431.2 1370.8L1432.0 1377.4L1430.0 1381.5L1427.5 1384.4L1427.1 1379.5L1422.6 1381.5L1421.4 1376.6L1414.0 1379.0L1413.6 1375.8L1418.5 1372.1L1423.0 1372.5L1425.1 1370.4ZM1423.0 1355.7L1427.1 1355.9L1428.8 1361.3L1425.9 1365.4L1425.1 1362.6L1423.4 1360.5L1425.5 1358.8ZM1413.6 1358.4L1418.1 1359.7L1418.9 1365.0L1417.3 1370.0L1415.2 1367.5L1416.1 1364.2L1413.4 1364.2ZM1394.0 1372.9L1397.2 1369.6L1403.0 1363.4L1404.2 1362.1L1402.6 1365.4L1398.9 1369.6L1395.2 1373.3ZM1406.7 1352.2L1410.3 1352.2L1411.6 1356.7L1409.1 1356.7ZM1360.4 1401.2L1362.9 1399.1L1368.6 1401.2L1370.2 1397.1L1376.8 1394.2L1380.9 1388.5L1386.6 1386.9L1389.9 1381.9L1392.3 1378.6L1396.0 1381.5L1402.2 1386.0L1397.7 1389.3L1395.6 1393.8L1397.2 1397.9L1401.3 1403.6L1396.8 1404.1L1395.2 1410.2L1391.1 1413.9L1389.9 1419.6L1389.1 1422.9L1383.7 1424.1L1376.8 1420.4L1371.9 1421.7L1365.3 1419.2L1364.5 1413.5L1360.8 1409.0L1360.4 1404.1ZM1304.4 1384.4L1313.4 1386.0L1316.6 1390.5L1323.2 1395.0L1326.9 1398.7L1330.5 1400.0L1335.9 1404.9L1338.7 1411.0L1342.0 1415.1L1348.1 1419.6L1347.7 1426.2L1347.3 1431.1L1342.4 1431.1L1339.5 1428.2L1333.0 1423.7L1327.7 1417.6L1324.8 1411.4L1319.9 1406.1L1318.3 1400.4L1313.8 1396.7L1309.3 1392.2L1304.8 1387.7ZM1344.9 1435.2L1348.1 1431.5L1352.2 1431.7L1358.4 1434.4L1366.6 1435.6L1368.2 1433.6L1375.1 1435.6L1382.5 1438.9L1382.5 1443.0L1375.6 1441.8L1367.4 1441.0L1358.4 1439.3L1349.8 1437.7ZM1404.6 1404.1L1409.1 1402.0L1417.3 1403.6L1423.0 1403.2L1426.7 1400.8L1423.8 1405.7L1418.9 1405.9L1409.9 1405.5L1405.8 1410.6L1409.9 1411.0L1412.0 1410.6L1418.9 1410.2L1419.3 1411.4L1413.6 1413.9L1410.7 1415.1L1414.4 1419.6L1417.3 1424.1L1416.1 1429.4L1413.2 1427.0L1412.0 1423.7L1409.1 1418.4L1407.1 1422.1L1407.1 1429.9L1403.4 1429.9L1403.4 1421.7L1400.5 1418.8L1404.6 1407.7ZM1435.7 1403.2L1438.2 1398.3L1441.0 1401.2L1438.6 1405.3L1439.8 1410.6L1436.9 1408.6ZM1450.4 1410.6L1456.2 1409.0L1462.7 1410.6L1466.8 1420.8L1472.1 1416.3L1478.7 1413.5L1487.3 1416.9L1491.4 1418.0L1497.5 1420.4L1505.7 1422.9L1511.0 1429.4L1515.9 1431.5L1519.2 1434.8L1516.3 1434.8L1520.0 1440.1L1525.3 1444.3L1531.5 1449.6L1527.8 1450.5L1520.0 1449.2L1515.5 1445.5L1511.8 1440.5L1505.7 1438.5L1500.8 1441.4L1500.8 1444.3L1491.4 1444.7L1486.9 1440.5L1481.9 1441.4L1479.1 1437.7L1482.4 1435.2L1479.1 1429.9L1470.9 1426.2L1462.7 1423.3L1458.2 1423.7L1457.8 1418.8L1461.9 1416.7L1455.4 1416.7L1450.4 1413.1ZM1521.6 1429.9L1529.0 1429.9L1533.9 1427.4L1537.2 1424.5L1537.6 1427.8L1532.3 1431.9L1526.6 1433.1L1521.6 1431.1ZM1531.1 1418.0L1536.4 1420.8L1540.9 1425.3L1539.2 1426.2L1534.3 1421.7ZM1547.0 1429.4L1552.3 1434.4L1549.9 1435.2L1547.0 1431.5ZM1567.5 1445.5L1572.4 1447.6L1570.3 1448.0ZM1558.9 1437.3L1567.5 1441.4L1565.0 1441.4ZM1419.8 1449.6L1425.5 1444.3L1434.1 1441.8L1432.0 1444.3L1425.9 1448.4L1421.8 1449.6ZM1405.0 1441.8L1411.6 1441.8L1417.3 1441.0L1416.9 1443.0L1409.5 1443.8L1405.0 1443.4ZM1392.3 1441.8L1398.5 1441.4L1401.7 1442.6L1397.2 1443.8L1392.3 1443.8ZM1382.9 1440.8L1387.4 1441.4L1391.9 1441.8L1390.7 1443.8L1385.8 1443.4ZM1401.3 1445.9L1406.2 1446.3L1408.7 1448.8L1403.4 1448.0ZM1437.8 1419.6L1444.3 1418.8L1449.6 1421.2L1444.3 1421.2L1438.2 1421.2ZM1430.4 1420.4L1434.9 1420.8L1432.8 1422.9ZM1379.6 1501.4L1381.3 1498.0L1387.0 1494.5L1392.3 1492.8L1400.5 1491.1L1409.5 1488.6L1414.4 1482.6L1414.4 1477.6L1420.2 1478.8L1420.2 1474.2L1424.3 1470.4L1429.6 1466.2L1434.1 1464.6L1439.0 1468.3L1444.7 1468.7L1445.5 1462.9L1450.0 1458.3L1457.0 1457.1L1457.0 1454.2L1466.8 1457.5L1474.2 1457.5L1470.5 1462.1L1468.9 1468.7L1475.0 1472.9L1484.0 1478.8L1490.5 1479.7L1493.8 1469.2L1493.8 1460.8L1497.5 1451.7L1501.6 1458.7L1502.0 1466.2L1509.0 1468.7L1511.8 1477.6L1513.0 1485.6L1521.6 1490.7L1526.6 1500.1L1531.5 1505.3L1540.1 1513.1L1541.3 1520.5L1542.9 1528.5L1540.5 1538.3L1537.2 1545.6L1533.1 1551.5L1529.0 1561.3L1527.8 1568.3L1520.0 1570.2L1513.0 1575.9L1506.5 1572.1L1501.6 1574.5L1493.4 1572.6L1487.3 1567.9L1483.2 1559.9L1479.5 1559.4L1481.1 1555.7L1478.3 1547.4L1476.6 1552.0L1474.2 1558.0L1469.3 1556.2L1463.5 1547.4L1451.3 1540.6L1441.8 1541.5L1430.4 1544.2L1421.8 1547.4L1419.8 1551.5L1409.5 1551.1L1403.4 1553.9L1397.2 1557.1L1389.1 1555.7L1385.4 1553.4L1387.8 1545.6L1387.4 1540.6L1384.6 1531.6L1381.7 1524.1L1378.4 1517.0L1379.6 1509.6ZM1506.5 1583.6L1513.5 1586.1L1521.2 1584.6L1521.2 1591.0L1517.1 1596.9L1511.8 1597.4L1509.0 1593.0ZM1621.1 1553.9L1623.9 1557.6L1628.0 1559.4L1630.1 1565.0L1634.2 1568.8L1639.5 1570.7L1644.8 1569.3L1642.4 1576.9L1638.7 1579.3L1635.4 1585.1L1631.3 1588.0L1629.7 1586.6L1630.9 1580.7L1625.6 1577.9L1628.9 1573.5L1629.3 1567.9L1626.0 1561.3ZM1621.1 1582.7L1627.6 1586.1L1626.0 1591.0L1621.5 1596.9L1615.3 1601.4L1613.3 1609.5L1607.2 1613.1L1600.6 1611.1L1595.7 1609.5L1601.4 1602.9L1608.8 1597.9L1614.9 1592.5L1618.6 1585.6ZM1585.5 1490.7L1591.6 1494.5L1597.8 1500.1L1594.9 1500.1L1589.2 1495.8ZM1639.9 1479.2L1645.2 1479.7L1644.8 1482.6L1639.9 1482.2ZM1646.0 1475.5L1650.5 1474.2L1648.9 1476.7ZM1596.1 1469.2L1598.6 1470.0L1599.4 1473.4L1596.9 1471.7ZM1195.9 1625.6L1202.9 1626.1L1201.6 1628.8L1196.7 1628.8ZM965.3 1244.0L969.2 1243.0L978.2 1242.8L976.6 1248.2L976.2 1250.3L972.9 1248.9L968.0 1246.6L965.3 1245.4ZM947.9 1230.0L952.0 1228.3L954.5 1232.0L953.7 1238.2L951.2 1239.2L948.8 1238.7L948.8 1232.9ZM949.6 1222.7L952.8 1219.7L953.5 1224.2L952.0 1227.6L949.6 1225.2ZM1010.5 1255.2L1014.6 1256.2L1022.0 1256.6L1021.6 1258.0L1015.5 1258.5L1010.5 1257.1ZM1046.6 1257.8L1049.4 1256.4L1056.0 1254.8L1053.5 1258.0L1049.4 1259.9L1047.0 1259.2ZM924.0 1236.3L927.1 1234.9L928.5 1235.8L926.9 1237.8ZM1009.3 1239.4L1013.4 1241.1L1015.0 1244.0L1012.6 1242.3ZM959.8 1152.2L963.5 1149.9L965.9 1152.2L964.3 1155.0L962.3 1156.8L960.2 1155.0ZM954.5 1153.3L958.2 1153.0L958.6 1155.6L955.3 1155.6ZM988.4 1142.9L992.1 1139.1L991.3 1142.9L989.3 1145.2ZM981.5 1149.3L984.4 1142.6L983.1 1147.6ZM1003.6 1137.0L1007.7 1135.2L1009.7 1135.8L1006.9 1138.2ZM1004.8 1133.4L1008.1 1132.5L1008.1 1134.3ZM967.2 1075.1L973.7 1070.8L979.0 1065.8L980.7 1068.0L975.8 1072.9L969.6 1074.7ZM1074.8 1430.7L1076.2 1432.3L1075.2 1434.0ZM1132.5 1355.7L1137.4 1355.5L1135.4 1356.7ZM1140.3 1494.5L1142.7 1494.5L1141.5 1496.2ZM1148.9 1491.1L1150.9 1491.1L1149.7 1492.4ZM845.2 1288.2L848.5 1287.3L846.9 1289.7ZM849.7 1289.3L851.6 1289.3L850.5 1290.8ZM855.0 1286.6L857.9 1286.6L856.3 1289.3ZM817.0 1344.2L818.6 1344.7L817.8 1345.9ZM808.8 1244.4L811.7 1244.7L810.0 1245.4ZM540.0 1408.6L542.4 1409.0L541.2 1411.4ZM884.1 1112.4L887.8 1112.4L886.6 1116.8ZM908.2 1123.0L910.7 1122.4L909.5 1127.3ZM1515.9 1209.7L1522.5 1206.7L1520.0 1208.7ZM1510.2 1215.2L1514.3 1212.2L1511.8 1215.7ZM1436.9 1298.1L1439.4 1295.0L1438.2 1297.2ZM1293.3 1351.8L1294.9 1352.6L1294.1 1359.7L1292.9 1358.8ZM949.2 1392.0L950.8 1392.2L950.0 1394.0ZM1091.2 1454.2L1092.4 1454.6L1092.0 1456.3ZM1583.4 1132.2L1587.9 1133.4L1584.3 1135.8ZM1200.4 1034.2L1207.0 1033.4L1205.7 1036.6L1200.8 1036.6ZM884.5 1158.2L885.1 1155.9L889.2 1155.3L891.7 1158.2L890.0 1161.3L889.2 1162.1L885.1 1160.1ZM542.1 960.9L557.8 957.4L565.7 953.1L574.4 955.7L578.8 949.6L603.2 947.8L618.9 947.3L645.0 949.6L660.7 953.1L652.0 957.4L638.0 962.7L644.1 965.3L629.3 972.3L624.1 978.4L613.6 981.8L600.5 983.6L604.9 991.4L596.2 996.7L589.2 1001.9L595.3 1005.9L585.7 1010.6L573.5 1008.9L563.1 1009.7L550.0 1008.0L550.0 1005.4L557.0 1003.6L555.2 997.5L567.4 1000.1L562.2 994.0L556.1 992.3L559.6 988.8L566.6 987.1L567.4 984.5L561.3 981.0L560.4 976.6L573.5 977.0L580.5 973.5L570.0 972.3L556.1 972.3L547.4 968.8ZM521.2 976.6L525.6 969.6L529.9 967.0L536.0 967.0L542.1 972.3L555.2 975.7L557.8 981.0L562.2 984.5L556.1 987.1L550.9 992.3L542.1 993.2L535.2 992.3L531.7 988.8L534.3 983.6L526.5 982.7L523.0 980.1ZM519.5 1004.5L524.7 1004.5L531.7 1007.1L540.4 1007.1L543.0 1010.6L543.0 1013.2L550.0 1016.7L561.3 1017.6L571.8 1015.8L582.2 1016.7L587.5 1020.2L585.7 1023.3L578.8 1025.1L571.8 1024.2L559.6 1025.4L547.4 1024.6L536.9 1021.9L536.0 1015.0L531.7 1010.6L521.2 1008.0ZM520.3 1020.5L526.5 1017.1L530.8 1020.5L529.9 1023.7L523.0 1023.2ZM496.5 1011.5L502.0 1010.6L507.3 1008.5L513.4 1009.2L514.6 1013.2L513.0 1020.5L507.3 1021.4L503.4 1020.5L502.9 1015.8L496.5 1015.5ZM435.8 1019.3L442.8 1010.1L453.2 1013.2L461.1 1017.6L468.9 1017.9L464.6 1010.1L467.2 1007.6L470.7 1008.3L473.3 1015.0L480.2 1014.1L482.0 1016.7L480.2 1020.5L467.2 1021.9L457.6 1023.7L450.6 1025.4L458.5 1020.5L449.7 1019.9L441.0 1020.5ZM414.0 1011.5L420.1 1006.3L428.8 1001.0L438.4 1000.7L438.9 1005.4L430.6 1008.9L422.7 1012.4L416.6 1012.9ZM452.4 997.5L459.3 995.4L464.6 997.2L457.6 1000.1ZM456.2 990.9L460.2 989.7L464.2 990.9L460.2 991.8ZM484.3 985.7L491.6 986.7L502.0 989.7L505.9 995.4L500.3 994.9L494.2 992.3L488.1 991.8L489.0 989.7ZM512.0 989.3L518.6 990.2L523.0 992.7L522.1 995.4L517.7 996.7L514.2 994.0ZM405.8 1027.7L417.5 1026.7L424.5 1028.6L434.6 1028.9L441.0 1033.3L432.3 1037.1L426.2 1041.1L421.8 1045.5L421.5 1049.5L411.9 1052.5L409.6 1049.5L400.9 1045.5L408.8 1033.3ZM427.9 1048.1L432.3 1042.0L437.5 1038.9L443.6 1036.2L447.1 1037.6L445.4 1040.6L455.0 1038.9L461.1 1041.6L465.4 1038.9L468.9 1040.6L472.4 1048.1L475.0 1044.6L472.8 1037.6L477.6 1036.4L482.9 1039.9L487.2 1053.3L501.2 1060.3L500.3 1062.4L494.2 1062.9L496.5 1067.6L488.1 1067.3L481.1 1065.2L475.0 1065.5L467.2 1068.1L452.4 1069.9L449.7 1066.9L441.0 1064.7L436.7 1060.3L455.0 1057.2L448.9 1055.4L432.3 1055.1L440.1 1050.7L434.0 1049.5ZM496.5 1040.2L502.9 1040.6L501.2 1035.9L504.7 1031.9L509.9 1033.3L516.9 1032.4L514.2 1036.8L518.6 1040.6L519.5 1046.4L511.6 1050.2L505.5 1045.5ZM523.0 1035.5L524.7 1030.7L529.9 1028.9L543.0 1031.0L537.8 1037.6L531.7 1039.4L529.1 1044.1L525.1 1043.7ZM509.0 1064.1L513.9 1060.0L520.3 1062.9L523.0 1066.4L520.3 1068.1L515.1 1066.4ZM547.4 1046.4L547.0 1042.0L550.0 1035.9L554.3 1033.8L561.7 1032.4L560.4 1035.9L563.4 1041.1L568.3 1035.0L577.9 1032.9L584.3 1039.4L584.3 1044.6L591.8 1043.2L597.1 1040.6L604.0 1043.7L611.0 1046.7L611.9 1050.4L619.7 1049.5L624.1 1054.5L632.8 1056.8L637.2 1060.3L639.8 1065.2L633.2 1069.4L641.5 1073.9L649.4 1076.0L655.5 1082.6L661.0 1083.3L658.1 1088.2L653.7 1093.4L649.4 1091.7L642.4 1085.6L637.2 1087.0L635.9 1090.3L639.8 1094.3L645.9 1097.4L649.4 1103.9L649.4 1108.8L641.5 1106.5L633.2 1103.0L643.3 1113.5L632.8 1111.4L621.5 1106.5L620.6 1103.0L609.3 1096.9L606.7 1098.7L595.3 1098.7L597.1 1094.3L611.9 1092.6L612.8 1089.1L618.0 1079.5L614.5 1073.4L604.0 1069.0L603.2 1065.5L598.8 1061.2L591.8 1058.6L588.3 1060.3L579.6 1060.6L564.8 1059.1L552.6 1056.5L550.0 1055.1L554.3 1050.7ZM585.4 1033.3L591.8 1032.1L602.3 1036.8L591.0 1038.5ZM561.7 1103.0L564.5 1090.8L570.0 1094.3L578.8 1097.8L580.5 1100.4L585.7 1103.5L582.2 1104.8L577.0 1103.0L573.5 1100.4L565.7 1106.0ZM600.0 1079.5L601.4 1074.2L605.8 1073.9L607.0 1076.9L603.2 1079.5ZM572.7 1111.7L575.3 1109.5L579.6 1109.5L575.3 1112.3Z"/><path fill="#4065f4" stroke="#fff" stroke-width="1" stroke-linejoin="round" d="M411.9 1189.0L413.5 1192.7L413.1 1197.9L411.1 1193.8L404.1 1192.2L407.0 1203.6L406.6 1212.2L404.9 1220.7L406.2 1225.6L405.3 1232.5L407.8 1236.8L411.1 1242.5L413.1 1244.9L415.6 1250.6L420.9 1260.1L425.4 1260.8L429.9 1263.6L434.4 1267.2L435.2 1269.5L445.0 1268.6L444.6 1269.5L459.8 1274.8L471.6 1274.8L471.6 1272.7L478.6 1272.7L484.7 1277.9L486.8 1282.6L492.1 1285.3L495.4 1281.7L499.4 1281.7L503.1 1286.6L507.2 1291.9L508.9 1296.8L516.8 1298.7L515.8 1295.9L516.6 1291.5L521.5 1287.5L526.9 1283.5L531.8 1281.9L538.7 1283.0L544.1 1284.4L548.6 1284.8L549.4 1279.9L554.3 1279.5L560.4 1279.0L565.3 1282.1L569.4 1280.6L571.9 1281.3L576.0 1285.7L575.6 1290.6L579.7 1297.6L582.5 1302.2L585.0 1302.0L586.4 1299.8L587.0 1295.0L584.6 1287.9L581.7 1281.7L581.3 1277.7L582.9 1272.7L587.0 1269.1L591.1 1265.9L595.6 1263.1L601.3 1259.4L605.4 1256.6L603.8 1250.6L602.2 1248.9L601.3 1244.0L601.7 1238.2L603.4 1244.0L604.2 1247.8L607.1 1241.6L605.4 1237.3L607.9 1239.4L611.6 1235.8L611.6 1231.5L612.8 1230.0L619.8 1228.1L623.8 1227.1L627.9 1226.1L627.1 1225.2L624.7 1222.2L625.1 1219.7L627.9 1216.2L634.1 1213.2L640.2 1210.7L638.6 1208.9L638.4 1206.7L636.9 1205.1L636.9 1199.1L634.9 1197.7L631.2 1197.2L627.9 1201.0L626.7 1203.6L624.7 1207.7L621.8 1209.7L608.7 1209.7L602.2 1213.7L600.1 1216.7L592.3 1216.7L591.1 1218.5L591.1 1220.2L585.0 1223.2L576.8 1226.1L574.3 1223.2L577.2 1219.7L578.0 1208.2L572.3 1204.1L569.0 1202.1L567.4 1200.0L560.4 1196.4L553.1 1192.7L549.0 1194.3L546.1 1193.8L540.0 1193.8L533.8 1191.1L527.3 1190.6L526.5 1187.5L525.0 1186.9L525.0 1189.0L411.9 1189.0ZM337.4 1062.6L327.2 1059.3L316.9 1058.5L306.7 1057.1L298.5 1056.7L290.3 1053.7L282.2 1053.0L273.6 1050.0L267.8 1053.7L259.7 1056.0L251.5 1058.5L246.6 1062.9L241.2 1067.6L234.3 1068.3L231.8 1071.9L237.1 1074.0L243.3 1077.2L245.3 1080.6L252.3 1081.3L255.6 1086.1L244.5 1084.4L237.1 1086.1L226.5 1090.8L233.1 1093.5L234.3 1097.8L247.4 1098.2L254.7 1098.2L256.4 1103.4L250.2 1105.0L244.1 1107.6L240.0 1110.5L235.5 1115.5L238.4 1121.2L241.2 1124.9L244.1 1127.9L250.2 1126.7L251.9 1132.2L257.6 1134.3L263.7 1136.1L267.0 1134.6L270.7 1134.0L269.9 1137.6L269.5 1141.7L265.0 1145.2L257.6 1150.5L250.7 1153.3L245.3 1155.9L240.0 1158.5L246.6 1157.6L253.5 1155.0L259.7 1152.8L265.8 1150.5L271.9 1146.4L276.8 1141.7L282.2 1138.2L286.3 1134.0L287.1 1130.4L290.3 1126.7L292.4 1123.0L296.5 1119.9L300.6 1119.3L298.1 1121.8L294.0 1124.9L293.2 1131.0L298.5 1130.4L302.6 1127.9L307.5 1125.5L310.8 1121.2L315.7 1121.2L319.0 1124.3L325.1 1126.4L331.3 1127.0L337.4 1127.3L342.3 1128.8L348.5 1132.8L353.8 1136.4L357.9 1138.8L360.7 1142.9L366.0 1147.6L370.1 1152.8L374.2 1155.6L378.3 1157.3L381.6 1156.2L382.4 1150.5L376.3 1146.4L372.2 1142.9L368.1 1135.8L362.0 1130.4L355.8 1129.8L351.7 1133.1L345.6 1126.1L341.5 1125.2L337.4 1124.9L337.4 1062.6ZM282.2 1141.7L291.2 1139.3L291.6 1142.3L285.0 1145.8ZM229.8 1125.5L235.9 1124.9L236.3 1127.9L231.0 1127.9ZM240.0 1156.8L246.6 1157.9L245.3 1159.6L239.6 1159.0ZM367.3 1148.7L372.2 1149.3L374.2 1156.2L370.1 1157.3ZM355.8 1137.6L362.0 1138.2L363.6 1144.6L359.1 1144.6ZM275.8 1325.5L276.6 1323.3L279.7 1325.0L280.7 1326.5L277.7 1328.9L276.2 1328.2ZM273.2 1320.3L276.0 1320.8L274.4 1321.8ZM266.8 1317.8L269.1 1318.2L267.4 1318.9ZM260.7 1315.2L262.3 1315.2L261.7 1316.3ZM884.1 1156.2L880.4 1159.6L876.5 1163.0L878.2 1167.4L876.3 1173.2L881.2 1173.5L887.6 1170.2L890.0 1164.6L889.2 1162.1L885.1 1160.1L884.5 1158.2ZM938.7 1184.5L940.2 1184.5L940.2 1186.1L938.7 1186.1ZM1684.9 1103.4L1690.6 1104.0L1695.6 1106.0L1695.6 1107.3L1689.8 1107.3L1684.5 1106.0Z"/><path fill="#fff" d="M537.5 1200.8L542.4 1200.0L544.5 1201.5L550.2 1199.5L554.3 1197.2L552.6 1200.0L556.7 1202.1L562.5 1201.5L566.6 1200.8L568.2 1202.1L567.8 1199.5L566.6 1194.8L561.2 1190.6L553.5 1189.6L549.0 1194.3L544.1 1196.9ZM555.9 1226.1L560.4 1224.7L561.6 1219.7L560.4 1214.7L564.5 1209.7L566.6 1205.9L560.4 1205.6L555.9 1209.2L554.3 1212.2L556.3 1213.7L555.1 1219.7L555.1 1223.7ZM567.8 1205.6L572.7 1209.7L573.5 1213.2L571.1 1216.2L576.4 1214.7L577.2 1219.7L580.1 1217.7L580.1 1212.2L581.7 1208.7L586.6 1212.2L587.0 1208.2L582.9 1205.1L576.8 1204.1L570.7 1203.6ZM572.7 1226.1L576.8 1227.6L582.9 1225.6L591.1 1220.7L587.0 1221.2L580.9 1221.7L574.7 1224.7ZM587.8 1218.2L591.1 1218.5L597.2 1218.5L602.6 1217.0L602.2 1214.2L597.2 1215.0L591.1 1215.7ZM1044.5 1408.6L1048.6 1406.5L1053.5 1406.9L1053.9 1411.4L1051.9 1416.3L1048.6 1418.0L1044.5 1416.7L1044.1 1412.2ZM1108.8 1206.7L1110.8 1204.6L1116.9 1201.5L1123.1 1200.0L1131.3 1201.0L1132.1 1208.2L1125.1 1208.2L1120.2 1211.7L1123.9 1216.5L1129.2 1220.7L1130.9 1225.6L1131.3 1234.4L1134.9 1239.2L1135.4 1246.8L1135.1 1248.9L1129.2 1250.1L1123.1 1249.9L1119.4 1246.8L1114.9 1245.9L1114.5 1242.1L1116.1 1237.8L1116.9 1233.4L1120.4 1232.7L1116.9 1230.5L1114.1 1225.6L1109.0 1219.7L1108.8 1214.7L1105.9 1211.2L1107.5 1208.2Z"/><path fill="none" stroke="#fff" stroke-width="1.1" stroke-linejoin="round" d="M878.2 1225.4L880.8 1224.2L881.2 1225.6L887.4 1224.9L889.0 1226.6L886.1 1229.6L886.6 1232.9L885.7 1235.8L883.7 1236.1L885.7 1239.2L884.5 1242.1L885.7 1243.3L883.7 1245.9L884.1 1247.8M907.0 1218.0L908.7 1219.5L911.5 1220.2L917.2 1220.7L920.3 1221.7L921.5 1222.2L927.3 1222.4M924.8 1177.8L927.1 1179.4L931.6 1183.7L934.2 1182.9L934.2 1184.8L938.1 1186.1L940.4 1186.7L941.8 1188.0L944.7 1188.2L947.9 1189.0L945.5 1193.8L945.3 1196.4L943.0 1197.4L939.3 1201.8L939.5 1203.9L942.2 1202.6L943.2 1205.1L943.0 1207.2L941.6 1209.2L943.0 1211.2L942.6 1213.0L945.7 1214.0L945.3 1215.8M928.1 1176.5L931.8 1176.5L934.8 1175.9L938.3 1177.5L937.7 1179.4L938.9 1179.7L939.3 1177.3L939.8 1174.0L942.0 1173.5L943.2 1171.5L943.2 1169.3L943.8 1166.3L943.0 1165.5M938.9 1179.7L940.2 1182.1L939.3 1183.2L937.9 1184.5L938.1 1186.1M939.3 1183.2L941.0 1184.8L940.4 1186.7M949.6 1156.8L953.1 1157.3M972.7 1162.4L973.3 1165.7L972.3 1168.2L974.1 1169.9L974.7 1172.6L974.1 1174.0L975.8 1177.0L975.1 1179.2L972.9 1178.4L969.6 1180.0L965.5 1181.9L963.9 1182.1L965.5 1185.3L970.9 1190.4L967.6 1193.0L966.6 1195.9L967.8 1196.9L964.3 1196.4L959.2 1197.4L956.1 1197.9L953.7 1196.6L949.6 1195.9L945.3 1196.4M953.7 1196.6L953.5 1199.2L957.1 1200.0L955.7 1203.3L952.4 1202.3L951.2 1205.4L949.0 1202.3L946.5 1205.1L943.2 1205.1M957.1 1200.0L960.0 1199.7L964.1 1199.2L965.1 1201.0L970.4 1202.1L969.2 1203.6L970.0 1205.6L970.6 1206.4M970.9 1190.4L974.5 1191.1L975.8 1189.0L980.3 1190.4L983.7 1191.1L984.6 1194.3L981.7 1197.4L980.3 1200.3L975.8 1201.5L970.4 1202.1M975.1 1179.2L981.1 1180.2L983.5 1181.6L986.8 1182.1L991.5 1186.4L986.6 1189.8L983.7 1191.1M991.5 1186.4L994.2 1186.1L996.6 1188.0L1000.3 1186.9L1006.7 1188.5L1007.3 1185.9L1012.6 1180.5L1011.0 1175.6L1011.0 1172.4L1009.3 1171.3L1012.2 1169.1L1010.5 1162.1L1007.7 1159.9L994.8 1159.3M1007.7 1159.9L1007.3 1156.5L1001.5 1154.8M1010.5 1162.1L1014.2 1162.4L1018.7 1160.1L1024.0 1154.5L1023.2 1152.2L1016.7 1148.7L1008.1 1148.1L1000.5 1149.9M1023.2 1152.2L1029.6 1149.6L1028.1 1142.9L1026.5 1141.4L1020.8 1139.6L1014.2 1139.5M1026.5 1141.4L1026.9 1137.6L1026.5 1134.6L1029.0 1131.0L1029.2 1129.9M1028.1 1123.3L1034.3 1118.7L1042.1 1111.1L1037.1 1103.4L1039.2 1099.5L1035.9 1090.8L1037.6 1090.2L1033.5 1082.0L1037.1 1076.5L1031.0 1072.9L1032.6 1066.9L1037.6 1062.6L1040.6 1061.5M1032.6 1066.9L1034.3 1065.1L1030.6 1061.1L1024.9 1060.7L1020.6 1062.2L1016.7 1070.1L1011.4 1069.0L1000.3 1066.9L998.5 1066.9L1004.4 1070.8L1011.2 1074.7L1010.7 1079.9L1012.6 1082.7L1011.2 1086.1L1013.2 1089.3M998.5 1066.9L996.6 1071.5L988.4 1070.8L987.6 1074.7L981.5 1079.9L977.4 1084.7L973.7 1087.1L974.1 1094.9L970.2 1097.5L972.3 1100.1L964.1 1104.0L963.5 1106.0L964.3 1112.4L964.7 1116.2L967.0 1118.4L964.3 1120.5L965.5 1126.1L962.7 1127.3L962.3 1129.1L962.7 1131.6L960.0 1132.8M1029.6 1149.6L1040.8 1152.8L1040.4 1157.3L1048.2 1164.9L1042.5 1167.4L1044.5 1172.4L1039.2 1176.7L1033.9 1175.1L1025.7 1175.1L1017.9 1173.5L1011.0 1175.6M1044.5 1172.4L1052.7 1171.0L1055.1 1174.6L1060.1 1181.9L1067.8 1182.1L1069.9 1184.3L1078.5 1185.9L1077.2 1191.1L1077.7 1195.1L1071.1 1196.4L1070.7 1199.0M1006.7 1188.5L1005.0 1192.2L1008.1 1194.3L1016.3 1195.6L1023.2 1193.0L1026.9 1191.9L1033.5 1194.6L1035.5 1200.0L1037.6 1202.6L1032.8 1204.6L1029.8 1207.4L1035.9 1208.7M1023.2 1193.0L1025.7 1196.4L1029.4 1200.0L1029.8 1207.4M984.6 1194.3L991.3 1195.3L998.3 1191.7L1005.0 1192.2M1008.1 1194.3L1000.9 1203.1L997.2 1203.9L991.7 1205.1L986.6 1204.9L981.9 1202.1L980.3 1200.3M997.2 1203.9L1002.0 1208.7L1002.6 1211.0L1006.2 1211.2L1007.1 1213.7L1008.5 1215.7L1018.7 1216.5L1024.9 1214.0L1031.4 1216.0M1007.1 1213.7L1006.0 1219.7L1008.3 1222.9L1005.8 1223.2L1008.3 1227.8L1014.6 1226.9L1021.2 1227.8L1022.2 1226.1L1026.1 1224.2L1029.0 1224.8M1022.2 1226.1L1023.2 1227.8L1021.0 1230.8M1008.3 1227.8L1003.2 1230.0L1000.1 1230.3L998.7 1233.9L996.2 1235.8M1000.1 1230.3L998.3 1227.8L998.7 1225.2L996.4 1222.0L995.2 1221.5L993.4 1223.7L993.8 1225.4M998.7 1225.2L1002.8 1223.4L1005.8 1223.2M970.0 1207.2L974.1 1206.4L978.4 1205.4L978.4 1203.6L981.9 1202.1M978.8 1208.7L983.5 1208.4L988.0 1209.2L992.1 1210.5L993.6 1210.2L992.5 1213.2L994.6 1214.5L992.9 1217.2L990.9 1218.5L989.9 1222.0L986.6 1219.7L982.7 1215.7L980.7 1213.7L978.8 1210.7L978.8 1208.7M991.7 1205.1L992.3 1207.2L993.8 1208.7L992.1 1210.5M992.9 1217.2L997.7 1220.5L996.4 1222.0M1084.4 1227.0L1089.5 1226.9L1092.2 1229.1L1093.0 1233.9L1097.7 1235.8L1096.1 1242.1L1097.7 1247.8L1087.7 1248.2L1080.9 1248.2L1073.2 1250.1L1066.2 1250.3L1064.6 1252.2L1062.3 1254.1M1078.1 1217.7L1087.9 1218.7L1094.0 1221.7L1099.3 1221.2L1104.3 1225.4L1105.1 1229.1L1098.5 1228.1L1092.2 1229.1M1104.3 1225.4L1107.9 1228.1L1113.3 1225.4M1098.5 1228.1L1101.0 1230.5L1102.6 1233.4L1104.7 1236.8L1104.7 1239.7M1097.7 1235.8L1104.7 1239.7L1110.8 1235.8L1112.2 1237.3L1110.8 1240.2L1114.4 1241.9M1087.7 1248.2L1083.0 1251.5L1082.2 1260.8L1073.2 1265.4L1065.0 1270.4L1060.5 1268.6L1059.9 1274.1L1057.6 1282.8M1058.0 1266.8L1061.1 1265.4L1064.2 1261.7L1061.7 1259.7M1057.2 1283.0L1054.5 1275.2M1057.6 1283.7L1062.1 1284.4L1067.8 1280.8L1069.9 1278.6L1065.8 1274.1L1074.8 1271.1L1073.2 1265.4M1074.8 1271.1L1079.7 1272.0L1086.7 1275.9L1097.3 1284.4L1104.9 1284.8L1108.5 1280.8L1110.6 1280.9M1104.9 1284.8L1109.6 1287.3L1112.4 1287.3M1097.7 1247.8L1100.2 1253.4L1103.4 1257.1L1100.2 1262.7L1103.0 1267.2L1109.6 1271.8L1109.6 1276.3L1110.8 1278.6L1113.1 1281.0M1089.5 1339.6L1091.2 1335.4L1096.1 1335.4L1105.5 1336.0L1108.8 1336.7L1111.6 1332.2L1115.3 1330.3L1127.2 1328.6L1139.4 1324.4L1142.1 1315.9L1140.3 1312.8L1129.6 1311.8L1125.5 1306.1L1125.5 1304.6M1127.2 1328.6L1131.7 1338.6M1142.1 1315.9L1142.7 1306.4L1145.0 1303.1M1122.3 1304.0L1123.9 1304.6L1125.5 1304.4M1134.9 1247.0L1138.6 1246.6L1144.4 1243.5L1148.9 1244.0L1157.0 1246.3L1161.5 1250.3L1164.6 1250.3L1164.8 1255.2L1162.0 1262.2L1163.6 1264.9L1162.2 1267.5L1163.4 1274.1L1167.3 1274.7L1163.4 1281.5L1170.1 1283.5L1173.4 1293.2L1171.2 1295.7L1167.5 1297.4L1166.5 1302.0M1170.1 1283.5L1176.7 1283.7L1185.7 1281.3L1186.1 1276.5L1192.6 1273.6L1198.0 1272.2L1198.0 1266.8L1202.1 1265.4L1200.6 1262.7L1205.3 1261.0L1207.6 1256.2L1205.7 1253.1L1211.5 1249.4L1219.6 1248.5M1164.8 1255.2L1169.3 1256.9L1173.0 1254.1L1178.3 1252.0L1179.3 1248.2L1186.5 1247.0L1191.8 1247.8L1198.0 1248.0L1201.6 1245.9L1202.5 1243.5L1206.3 1242.8L1207.4 1249.9L1214.3 1246.6L1220.9 1247.5L1219.6 1248.5M1186.5 1247.0L1177.9 1239.4L1169.7 1234.4L1164.0 1228.3L1160.3 1227.6L1159.9 1223.7L1154.2 1220.7L1150.9 1223.7L1147.4 1225.4L1147.8 1228.1L1143.5 1228.1L1141.3 1228.1L1138.4 1224.4L1131.3 1224.2L1129.0 1225.9M1143.5 1228.1L1143.5 1209.7L1153.8 1206.7L1164.4 1212.7L1168.1 1217.2L1180.0 1216.2L1184.9 1219.7L1184.5 1224.7L1187.3 1228.8L1192.6 1231.0L1196.7 1227.6L1204.7 1223.4L1215.1 1222.7L1215.6 1219.2L1218.0 1218.5L1224.2 1220.7L1238.1 1220.7L1242.8 1222.9L1242.6 1211.7L1252.0 1206.9L1254.0 1198.5L1265.1 1197.4L1265.3 1192.2L1270.4 1188.0L1271.8 1188.5M1271.8 1188.5L1263.0 1185.9L1255.7 1178.4L1241.7 1179.2L1232.7 1165.7L1227.4 1160.7L1214.7 1164.6L1215.1 1161.3L1205.7 1161.3L1204.5 1155.3L1196.7 1153.9L1181.2 1159.9L1165.2 1162.4L1163.6 1170.4L1166.5 1176.7L1159.5 1179.2L1153.4 1177.8L1146.8 1178.4L1142.3 1180.5L1137.4 1178.4L1129.6 1175.6L1122.3 1174.6L1113.7 1180.5L1113.3 1184.3L1105.9 1192.2L1107.9 1195.9L1111.6 1195.9L1114.9 1202.6L1115.7 1202.8M1242.8 1222.9L1234.4 1228.6L1229.1 1229.6L1225.4 1232.5L1220.5 1232.2L1216.0 1237.0L1216.8 1241.6L1220.9 1242.1L1220.9 1247.5M1204.7 1223.4L1205.7 1223.7L1201.6 1226.6L1208.6 1228.6L1213.5 1230.3L1209.0 1232.0L1203.3 1233.4L1203.3 1236.3L1208.2 1237.8L1216.0 1237.0M1203.3 1236.3L1196.7 1233.9L1194.7 1236.8L1190.6 1236.8L1194.3 1243.0L1191.8 1247.8M1271.8 1188.5L1273.5 1187.5L1281.4 1184.8L1291.7 1179.4L1302.3 1183.7L1312.5 1185.1L1316.6 1180.8L1315.4 1175.6L1323.2 1172.9L1332.2 1176.7L1333.0 1181.1L1351.8 1182.1L1358.4 1187.5L1367.4 1188.2L1376.4 1186.1L1382.5 1182.4L1391.9 1184.3M1273.5 1187.5L1274.5 1191.1L1282.7 1195.1L1286.8 1200.0L1286.3 1208.2L1297.0 1210.0L1304.8 1213.5L1308.4 1221.0L1331.0 1222.2L1344.0 1226.6L1352.2 1223.2L1366.1 1220.7L1372.3 1216.2L1371.9 1209.7L1378.8 1210.7L1385.0 1207.7L1391.9 1202.6L1404.6 1201.0L1404.2 1199.2L1397.2 1194.3L1387.0 1195.9L1389.1 1190.1L1391.9 1184.3M1391.9 1184.3L1396.8 1186.4L1402.6 1182.9L1402.6 1180.5L1408.3 1172.9L1405.4 1169.3L1408.7 1165.7L1420.2 1164.6L1429.6 1168.5L1436.1 1182.1L1436.5 1185.1L1443.9 1186.7L1448.8 1190.4L1450.2 1195.3L1456.6 1195.6L1466.8 1191.9L1463.1 1198.5L1459.0 1208.9L1453.9 1208.2L1450.4 1210.0L1451.3 1217.2L1448.8 1221.5L1449.2 1223.2M1449.2 1223.2L1445.9 1220.0L1438.6 1224.7L1433.7 1225.6L1430.8 1229.1L1423.4 1234.6M1432.6 1245.2L1434.5 1242.5L1439.6 1241.1M1356.3 1317.8L1351.0 1315.9L1350.4 1312.0L1345.3 1310.3L1340.0 1313.3L1332.4 1313.9L1330.7 1319.5L1328.3 1317.8L1323.2 1315.6L1320.3 1311.1L1318.3 1307.2L1313.6 1307.4L1314.4 1302.4L1318.3 1299.0L1318.3 1291.7L1312.7 1288.6L1307.8 1283.5L1301.5 1283.9L1291.3 1290.6L1289.4 1290.8L1284.3 1289.5L1280.8 1289.3L1278.2 1292.8L1275.1 1290.4L1266.3 1290.2L1258.9 1285.9L1249.9 1279.5L1246.0 1279.9L1236.6 1274.1L1237.2 1267.2L1239.7 1260.3L1232.7 1255.7L1225.0 1250.3L1219.6 1248.5M1278.2 1292.8L1281.8 1295.4L1291.1 1294.8L1289.4 1290.8M1246.0 1279.9L1242.2 1286.2L1249.5 1290.2L1258.5 1291.9L1265.5 1295.9L1274.7 1296.8L1275.1 1290.4M1232.7 1255.7L1225.4 1258.0L1217.2 1259.4L1216.8 1263.1L1222.5 1270.4L1218.8 1273.1L1218.8 1276.8L1214.7 1281.3L1212.3 1285.5L1208.2 1289.9L1203.3 1289.7L1198.8 1294.1L1202.1 1299.8L1204.5 1305.5L1195.9 1305.9L1193.5 1308.5M1279.0 1317.1L1278.2 1312.0L1274.9 1305.1L1277.8 1300.7L1276.1 1296.1L1281.8 1298.5L1282.1 1301.6L1292.5 1302.9L1291.7 1306.4L1287.6 1306.8L1287.2 1309.4L1288.8 1312.0L1290.0 1310.7L1293.3 1315.9L1293.3 1318.9L1292.1 1321.2M1293.3 1315.9L1295.8 1315.0L1296.6 1307.7L1301.9 1300.7L1303.9 1295.4L1311.3 1291.0L1312.7 1288.6M1317.9 1366.4L1320.3 1359.7L1320.1 1353.0L1316.2 1345.5L1319.1 1340.0L1314.6 1334.6L1314.6 1330.6L1319.1 1325.5L1324.0 1322.9L1328.3 1317.8M1324.0 1322.9L1325.8 1326.5L1328.5 1326.3L1327.9 1334.8L1332.2 1332.0L1337.1 1331.2L1342.8 1335.0L1343.0 1339.2L1346.3 1343.0L1344.9 1348.2L1336.3 1348.6L1334.0 1351.3L1333.2 1351.5L1335.5 1359.4M1344.9 1348.2L1348.1 1349.9L1354.3 1346.7L1354.3 1356.5L1347.5 1359.4L1349.0 1363.0L1344.5 1362.3L1341.8 1364.6M1332.4 1313.9L1335.9 1320.1L1342.4 1322.7L1339.5 1327.4L1344.9 1329.9L1350.4 1337.1L1353.9 1343.4L1354.3 1346.7M1324.1 1381.0L1328.1 1384.2L1332.2 1381.9M1363.1 1399.1L1366.6 1403.6L1371.9 1403.2L1373.5 1401.4L1380.5 1401.4L1384.1 1398.1L1387.4 1393.4L1387.2 1389.9L1395.6 1390.3M1491.4 1418.0L1491.4 1444.7M905.4 1257.6L907.2 1260.3L907.4 1265.9L909.3 1271.3L899.4 1273.6L899.4 1276.8L893.9 1280.8L878.9 1286.6L878.9 1292.8L878.9 1298.5L865.3 1298.5L865.3 1309.6L861.2 1311.5L860.8 1318.6L845.0 1318.6M878.9 1291.2L860.4 1291.2M878.9 1292.8L894.7 1302.9L919.1 1319.7L919.3 1321.4L927.3 1325.7L927.9 1328.6L931.8 1328.0L937.9 1326.7L963.4 1309.4L961.4 1305.9L956.3 1304.6L952.8 1297.6L954.7 1296.3L954.9 1289.7L953.5 1279.7L951.4 1271.3L948.3 1269.5L945.1 1263.6L947.9 1259.4L948.1 1251.0L949.6 1248.9M953.5 1279.7L956.5 1276.8L956.5 1273.1L961.4 1270.0L961.4 1266.6M894.7 1302.9L887.8 1302.9L891.9 1343.4L876.3 1343.4L870.6 1343.8L866.5 1343.2L864.5 1346.5L859.5 1341.1L855.0 1338.6L847.7 1339.2L846.9 1340.9M864.5 1346.5L867.7 1356.3L858.3 1355.3L846.0 1356.5M845.6 1351.5L852.6 1350.5L857.9 1352.4L852.6 1352.6L845.8 1353.4M858.3 1355.3L858.3 1359.2L853.0 1362.3M867.7 1356.3L876.3 1356.3L880.4 1362.1L881.6 1365.4L883.1 1372.9L880.4 1376.2L875.9 1377.0L876.1 1372.5L872.2 1372.5L870.6 1369.2L868.6 1366.3L863.2 1366.7L860.0 1370.2M872.2 1372.5L871.0 1375.3L867.3 1378.8M880.4 1376.2L879.6 1380.7L884.1 1383.4L883.5 1389.3M881.6 1365.4L889.0 1363.4L891.9 1364.4L895.1 1367.5L903.1 1368.8L903.3 1374.9L901.1 1380.3L902.9 1386.4M903.1 1368.8L902.7 1362.1L913.8 1361.7L916.4 1365.0L916.0 1371.2L917.2 1373.3L916.4 1379.0L919.3 1382.3M913.8 1361.7L918.1 1362.1L920.1 1369.2L920.9 1381.5M918.1 1362.1L924.2 1358.4L929.1 1359.2L929.9 1364.2L925.8 1370.4L925.4 1381.3M891.9 1364.4L892.7 1358.8L896.4 1355.1L901.7 1350.9L911.3 1345.3L915.4 1345.9L918.5 1352.2L923.0 1356.3L924.2 1358.4M915.4 1345.9L928.7 1344.0L931.6 1338.8L931.8 1328.0M929.1 1359.2L931.2 1351.8L942.6 1353.8L951.2 1354.5L963.5 1353.0L970.0 1350.9L969.6 1348.0L977.8 1337.5L979.4 1322.7L975.8 1311.5L972.5 1313.3L963.4 1309.4M975.8 1311.5L1012.6 1326.5L1012.6 1324.4L1016.7 1324.4L1016.7 1315.9L1016.7 1284.4L1015.5 1279.9L1017.3 1273.4M1016.7 1315.9L1065.4 1315.9M1012.6 1326.5L1012.6 1342.6L1008.1 1343.4L1006.5 1349.3L1004.4 1355.1L1008.1 1360.5L1007.9 1362.3L1003.2 1363.8L992.1 1370.4L983.9 1376.0L977.8 1376.6L971.7 1366.3L977.8 1366.3L973.7 1355.1L972.1 1353.4L970.0 1350.9M972.1 1353.4L968.4 1367.9L962.7 1378.6L957.8 1378.2L952.4 1381.1L949.6 1387.7M977.8 1376.6L973.7 1383.2L975.8 1391.4L980.7 1398.3L968.8 1398.3L960.8 1398.3L954.5 1397.9M960.8 1398.3L960.8 1403.2L953.7 1403.2M968.8 1398.3L973.3 1401.8L971.3 1408.1L973.7 1411.4L973.3 1415.5L967.6 1417.2L961.8 1417.2L963.1 1422.1L959.8 1423.5M1007.9 1362.3L1012.2 1371.6L1017.1 1376.6L1026.5 1386.4L1017.9 1386.9L1007.7 1388.1L1006.0 1390.5L999.9 1389.7L994.2 1386.4L990.5 1389.7L990.5 1393.0L982.3 1393.0L980.7 1398.3M990.5 1393.0L987.2 1406.1L986.8 1409.4L980.7 1416.3L980.7 1421.2L976.6 1424.9L973.3 1427.4L969.2 1427.2L968.0 1426.2L964.3 1431.1M1012.2 1371.6L1014.6 1370.8L1022.8 1368.3L1029.0 1369.0L1033.1 1367.7L1035.1 1365.9L1040.4 1367.3L1047.0 1359.2L1049.8 1357.2L1049.8 1363.4L1053.9 1368.3L1054.7 1363.8L1057.6 1358.4L1062.1 1355.1L1063.7 1348.4L1065.8 1336.9L1072.3 1332.9M1063.7 1348.4L1069.5 1345.9L1074.0 1347.2L1081.3 1349.3L1087.9 1355.9L1090.7 1355.1M1087.9 1355.9L1085.4 1362.1L1089.9 1362.2L1091.4 1360.1M1089.9 1362.2L1089.1 1363.8L1094.4 1370.4L1106.7 1374.5L1110.8 1374.5L1098.5 1386.9L1090.3 1388.5L1085.8 1391.0L1081.3 1389.9L1076.0 1393.4L1070.3 1392.6L1065.4 1389.1L1061.7 1389.1L1061.5 1388.5M1053.9 1368.3L1053.1 1372.9L1049.4 1375.3L1056.4 1379.9L1058.8 1384.8L1061.5 1388.5L1055.1 1390.1L1053.5 1390.1L1051.5 1392.0L1046.1 1393.0L1042.1 1391.8L1040.6 1393.0L1035.5 1388.9L1030.6 1389.7L1026.5 1386.4M1085.8 1391.0L1082.2 1395.9L1082.2 1410.8L1084.4 1414.3M1053.5 1390.1L1055.6 1393.0L1057.6 1399.6L1053.5 1406.5L1053.1 1411.4L1068.7 1420.0L1068.2 1421.7L1074.8 1426.6M1040.6 1393.0L1040.2 1397.5L1042.5 1398.5L1037.1 1404.1L1035.5 1409.8L1035.5 1413.1L1033.1 1418.4L1034.7 1425.6L1035.5 1433.1L1040.2 1441.0M1053.1 1411.4L1039.2 1411.6L1040.6 1416.9L1039.2 1417.2L1040.2 1420.8L1034.7 1425.6M1035.5 1413.1L1039.2 1411.6M1033.1 1418.4L1037.1 1416.9L1039.2 1417.2M1040.2 1441.0L1032.6 1442.2L1030.6 1445.5L1031.6 1451.3L1030.4 1456.3L1033.3 1458.3L1036.3 1457.3L1036.3 1462.7L1030.6 1458.3L1025.7 1455.0L1017.9 1453.4L1014.2 1453.8L1012.6 1452.1L1005.6 1453.4L1005.2 1448.0L1003.6 1445.9L1003.6 1437.3L998.3 1437.3L997.5 1435.8L994.2 1436.0L992.1 1439.9L986.4 1440.5L982.3 1431.5L969.2 1431.3L964.7 1432.3M1040.2 1441.0L1049.0 1445.9L1053.5 1446.3L1055.6 1448.4L1056.0 1455.0L1061.3 1454.2L1067.8 1455.4L1071.9 1453.8L1079.7 1450.5M1056.0 1455.0L1055.1 1457.5L1055.8 1462.5L1060.9 1467.5L1060.9 1473.4L1058.8 1478.0L1055.1 1474.6L1055.1 1469.2L1050.2 1465.0L1049.0 1460.0L1051.5 1451.7L1049.0 1445.9M1050.2 1465.0L1038.0 1468.3L1038.8 1471.7L1032.6 1473.4L1024.9 1481.6L1017.7 1480.9L1010.1 1480.1L1004.4 1474.2L1004.4 1460.8L1012.6 1460.8L1012.6 1452.1M962.5 1478.6L969.6 1477.6L972.5 1479.2L989.7 1479.2L1002.0 1481.8L1010.1 1480.1M1038.8 1471.7L1049.0 1476.3L1048.2 1483.9L1049.0 1489.4L1047.4 1495.8L1042.5 1500.5L1034.7 1499.7L1029.0 1497.1L1027.7 1492.4L1021.6 1488.6L1017.7 1480.9M1017.7 1480.9L1010.5 1483.9L1000.3 1483.0L1000.3 1498.8L996.2 1498.8L996.2 1510.7L996.2 1526.7L986.0 1528.1L981.9 1527.6M996.2 1510.7L999.1 1519.7L1003.2 1519.9L1007.3 1514.0L1019.1 1514.4L1024.7 1506.1L1030.2 1501.4L1034.7 1499.7M1042.5 1500.5L1045.3 1509.2L1045.1 1515.9L1042.5 1515.1L1040.4 1519.7L1042.5 1521.9L1045.7 1519.9L1045.1 1515.9M1045.7 1519.9L1049.0 1519.9M1031.4 1527.6L1034.7 1531.2L1032.6 1534.3L1029.4 1536.8L1026.5 1534.5L1024.9 1532.1L1028.1 1528.9L1031.4 1527.6M622.6 1358.8L617.7 1361.7L614.4 1369.6L618.1 1372.9L618.1 1377.0L627.5 1378.6L630.4 1382.3L638.4 1381.9L636.9 1389.7L639.0 1393.4L636.7 1395.7L639.4 1397.9L640.6 1402.4L636.5 1400.2L628.6 1400.4L628.6 1403.0L631.4 1404.7L627.7 1405.1L630.4 1411.8L628.1 1424.5L625.1 1422.9L627.7 1418.4L616.1 1417.2L613.2 1412.7L606.7 1407.7L602.2 1405.7L597.7 1405.7L591.7 1401.6M606.7 1407.7L605.0 1413.7L600.7 1418.0L594.0 1421.2L592.3 1426.2L588.7 1425.6L585.2 1425.6L586.6 1423.3L585.8 1421.2M668.9 1372.3L664.8 1376.2L667.6 1378.6L664.2 1379.9L663.1 1383.0L665.8 1386.0L666.4 1387.1L664.8 1388.9L657.6 1390.7L652.3 1390.3L650.9 1394.6L654.9 1398.3L652.3 1399.3L646.4 1403.4L640.6 1402.4M665.8 1386.0L669.1 1386.9L670.7 1391.2L669.3 1397.7L673.8 1402.4L683.2 1399.6L685.6 1399.1L691.0 1397.9L697.9 1398.3L703.0 1390.7M680.7 1383.0L679.9 1385.6L676.8 1391.0L680.5 1395.9L683.2 1399.6M693.4 1383.8L691.8 1387.3L693.4 1392.6L691.0 1397.9M628.1 1424.5L616.1 1429.0L611.8 1437.5L615.9 1444.3L618.9 1448.4L625.5 1446.1L625.5 1452.5L629.8 1452.3L633.5 1459.0L632.0 1463.5L632.0 1470.4L629.4 1471.9L632.2 1475.5L630.0 1479.7L626.5 1483.3M629.8 1452.3L634.9 1452.5L647.2 1447.6L646.8 1455.4L656.2 1459.4L661.5 1462.9L667.2 1464.2L668.5 1474.4L675.6 1474.6L675.8 1478.8L679.1 1482.6L677.7 1490.0L676.4 1490.9L672.5 1487.5L661.7 1488.8L658.0 1499.9L652.7 1498.8L651.1 1502.5L647.6 1499.2L643.3 1498.0L640.2 1502.7L639.4 1502.3L635.3 1496.7L633.1 1492.0L634.3 1487.7L632.0 1486.0L630.0 1479.7M639.4 1502.3L639.0 1507.4L634.5 1509.6L634.9 1520.1L629.4 1526.9L627.9 1535.6L625.9 1540.2L627.5 1547.9L628.8 1552.9L625.7 1557.6L623.4 1564.6L624.7 1573.3L621.2 1578.3L620.2 1584.1L620.8 1590.2L619.1 1591.2L620.2 1596.9L622.0 1598.9L620.6 1600.9L622.6 1603.9L621.6 1607.7L620.2 1616.2L617.9 1619.1L618.3 1621.7L617.1 1625.1L614.0 1627.2L614.2 1633.1L618.5 1635.8L618.1 1640.1L620.2 1641.7L630.0 1642.6L634.3 1643.4M633.7 1645.3L633.7 1657.9M658.0 1499.9L664.8 1506.6L677.9 1512.4L674.6 1521.0L678.7 1522.3L683.2 1523.0L686.5 1522.3L691.0 1514.4L692.2 1507.4L687.7 1507.4L686.9 1501.6L677.5 1499.2L676.4 1490.9M691.0 1514.4L694.8 1516.6L694.2 1521.2L688.7 1524.5L678.7 1534.8L676.4 1542.9L675.4 1551.5M678.7 1534.8L685.2 1537.9L694.2 1543.1L696.7 1546.1L695.9 1550.6M536.9 1347.4L537.1 1344.4L538.9 1341.1L544.3 1340.9L540.2 1336.0L549.6 1333.7L549.6 1333.1L553.1 1330.8M549.6 1333.7L549.4 1341.7L550.6 1341.7M553.1 1342.6L548.8 1348.0L545.7 1350.7M548.8 1348.0L552.2 1350.3L555.1 1352.2L555.5 1354.0M555.5 1354.0L559.4 1350.7L563.7 1349.9L567.0 1346.3L574.1 1345.5M563.7 1361.7L567.8 1361.9L572.1 1362.6M575.2 1374.3L574.9 1370.0L576.6 1368.1M620.8 1325.7L621.0 1331.6L620.8 1332.7"/></svg>
<div class="abs" style="left:1801.5px;top:1572.5px;width:48px;height:89px;border:1px solid #eef0f5;border-radius:9px;background:#fff"></div>
<div class="abs" style="left:1801.5px;top:1616px;width:48px;height:1px;background:#eef0f5"></div>
<svg class="abs" style="left:1815.8px;top:1586.2px" width="20" height="20" viewBox="0 0 20 20" stroke="#4a4d74" stroke-width="2.4" stroke-linecap="round"><path d="M4.2 10H15.8M10 4.2V15.8"/></svg>
<svg class="abs" style="left:1815.8px;top:1631.5px" width="20" height="20" viewBox="0 0 20 20" stroke="#4a4d74" stroke-width="2.4" stroke-linecap="round"><path d="M4.2 10H15.8"/></svg>
<div class="abs" style="left:1882px;top:938.5px;width:854px;height:80px;background:#f7f8fb"></div>
<div class="t" style="left:69.60px;top:49.16px;font-size:29.44px;line-height:29.44px;font-weight:400;color:#62668c;letter-spacing:0.808px;-webkit-text-stroke:0.55px #62668c;">Statut d’authentification</div>
<div class="t" style="left:446.70px;top:52.90px;font-size:25.08px;line-height:25.08px;font-weight:400;color:#4fb27d;letter-spacing:0.691px;-webkit-text-stroke:1.0px #4fb27d;">SURVEILLANCE</div>
<div class="t" style="left:894.00px;top:54.06px;font-size:22.69px;line-height:22.69px;font-weight:400;color:#8dc791;letter-spacing:0.200px;-webkit-text-stroke:0.65px #8dc791;">En ligne</div>
<div class="t" style="left:2518.50px;top:56.06px;font-size:21.39px;line-height:21.39px;font-weight:400;color:#2146a4;letter-spacing:0.843px;-webkit-text-stroke:0.5px #2146a4;">Paramètres de contrôle</div>
<div class="t" style="left:25.50px;top:172.30px;font-size:26.79px;line-height:26.79px;font-weight:400;color:#62668c;letter-spacing:0.062px;">Quelles sont les performances de votre infrastructure d’envoi d’e-mails ?</div>
<div class="t" style="left:70.60px;top:272.86px;font-size:27.31px;line-height:27.31px;font-weight:400;color:#5f6e8b;letter-spacing:1.225px;-webkit-text-stroke:0.5px #5f6e8b;">Total des e-mails envoyés</div>
<div class="t" style="left:774.30px;top:272.86px;font-size:27.31px;line-height:27.31px;font-weight:400;color:#5f6e8b;letter-spacing:1.280px;-webkit-text-stroke:0.5px #5f6e8b;">E-mails délivrés</div>
<div class="t" style="left:1481.80px;top:272.86px;font-size:27.31px;line-height:27.31px;font-weight:400;color:#5f6e8b;letter-spacing:1.253px;-webkit-text-stroke:0.5px #5f6e8b;">Tentatives de phishing bloquées</div>
<div class="t" style="left:70.40px;top:384.00px;font-size:57.82px;line-height:57.82px;font-weight:700;color:#676b8f;letter-spacing:-2.250px;">2,717</div>
<div class="t" style="left:774.70px;top:378.90px;font-size:47.49px;line-height:47.49px;font-weight:700;color:#676b8f;letter-spacing:0.725px;">2,664</div>
<div class="t" style="left:1480.00px;top:378.90px;font-size:47.49px;line-height:47.49px;font-weight:700;color:#676b8f;letter-spacing:2.000px;">53</div>
<div class="t" style="left:775.30px;top:458.00px;font-size:21.41px;line-height:21.41px;font-weight:700;color:#676b8f;letter-spacing:2.700px;">98%</div>
<div class="t" style="left:69.60px;top:645.16px;font-size:29.44px;line-height:29.44px;font-weight:400;color:#62668c;letter-spacing:0.207px;-webkit-text-stroke:0.55px #62668c;">Garde de domaine</div>
<div class="t" style="left:432.00px;top:643.50px;font-size:36.8px;line-height:36.8px;font-weight:700;color:#23274b;letter-spacing:-0.300px;">Google Apps</div>
<div class="t" style="left:670.30px;top:647.50px;font-size:31.43px;line-height:31.43px;font-weight:400;color:#676b8f;letter-spacing:-0.233px;">sample.com</div>
<div class="t" style="left:886.20px;top:652.16px;font-size:21.77px;line-height:21.77px;font-weight:400;color:#93ca97;letter-spacing:0.333px;-webkit-text-stroke:0.7px #93ca97;">Sain</div>
<div class="t" style="left:2608.30px;top:650.98px;font-size:22.69px;line-height:22.69px;font-weight:400;color:#2146a4;letter-spacing:0.308px;-webkit-text-stroke:0.5px #2146a4;">Voir le statut</div>
<div class="t" style="left:70.30px;top:827.06px;font-size:26.72px;line-height:26.72px;font-weight:400;color:#5f6e8b;letter-spacing:1.563px;-webkit-text-stroke:0.5px #5f6e8b;">Requêtes de trafic des courriels sortants par pays</div>
<div class="t" style="left:757.90px;top:830.08px;font-size:22.69px;line-height:22.69px;font-weight:400;color:#3461d8;letter-spacing:1.555px;-webkit-text-stroke:0.5px #3461d8;">(Dernières 24 heures)</div>
<div class="t" style="left:2310.70px;top:829.16px;font-size:23.64px;line-height:23.64px;font-weight:400;color:#2f7af3;letter-spacing:0.006px;-webkit-text-stroke:0.45px #2f7af3;">Courriels Vérifiés</div>
<div class="t" style="left:2518.60px;top:829.16px;font-size:23.64px;line-height:23.64px;font-weight:400;color:#8a90b1;letter-spacing:-0.141px;-webkit-text-stroke:0.45px #8a90b1;">Courriels Suspects</div>
<div class="t" style="left:1909.20px;top:965.00px;font-size:28.39px;line-height:28.39px;font-weight:700;color:#5d6286;letter-spacing:-1.533px;">Pays</div>
<div class="t" style="left:2625.00px;top:965.00px;font-size:28.39px;line-height:28.39px;font-weight:700;color:#5d6286;letter-spacing:-1.680px;">Emails</div>
<div class="t" style="left:1909.20px;top:1041.70px;font-size:26.79px;line-height:26.79px;font-weight:400;color:#676b8f;letter-spacing:0.133px;">États-Unis</div>
<div class="t" style="left:1909.20px;top:1113.90px;font-size:26.79px;line-height:26.79px;font-weight:400;color:#676b8f;letter-spacing:0.250px;">Ireland</div>
<div class="t" style="left:1909.20px;top:1186.00px;font-size:26.79px;line-height:26.79px;font-weight:400;color:#676b8f;letter-spacing:0.311px;">Luxembourg</div>
<div class="t" style="left:2647.20px;top:1041.70px;font-size:26.79px;line-height:26.79px;font-weight:400;color:#676b8f;letter-spacing:1.200px;">96</div>
<div class="t" style="left:2650.30px;top:1113.90px;font-size:26.79px;line-height:26.79px;font-weight:400;color:#676b8f;letter-spacing:-1.900px;">10</div>
<div class="t" style="left:2666.50px;top:1186.00px;font-size:26.79px;line-height:26.79px;font-weight:400;color:#676b8f;letter-spacing:0.000px;">1</div>
<div class="abs" style="left:0;top:1640px;width:2856px;height:88px;background:linear-gradient(180deg,rgba(40,45,60,0) 0,rgba(40,45,60,.006) 30%,rgba(40,45,60,.03) 79.6%,rgba(40,45,60,.095) 80.4%,rgba(40,45,60,.135) 100%)"></div>
<div class="abs" style="left:2736px;top:1610px;width:86px;height:86px;border-radius:43px;background:#4064f3;box-shadow:0 4px 22px rgba(40,50,80,.22),0 0 60px 30px rgba(40,50,80,.05)"></div>
<svg class="abs" style="left:2756px;top:1626px" width="46" height="52" viewBox="2756 1626 46 52"><path fill="#fff" d="M2764.2 1630.8h29a4.5 4.5 0 0 1 4.5 4.5v38.9l-11.2-4.3h-22.3a4.5 4.5 0 0 1-4.5-4.5v-30.1a4.5 4.5 0 0 1 4.500-4.5z"/><path fill="none" stroke="#4064f3" stroke-width="1.9" stroke-linecap="round" d="M2765.3 1657.5c7 7.4 19.5 7.4 26.500 0"/></svg>
</body></html>
